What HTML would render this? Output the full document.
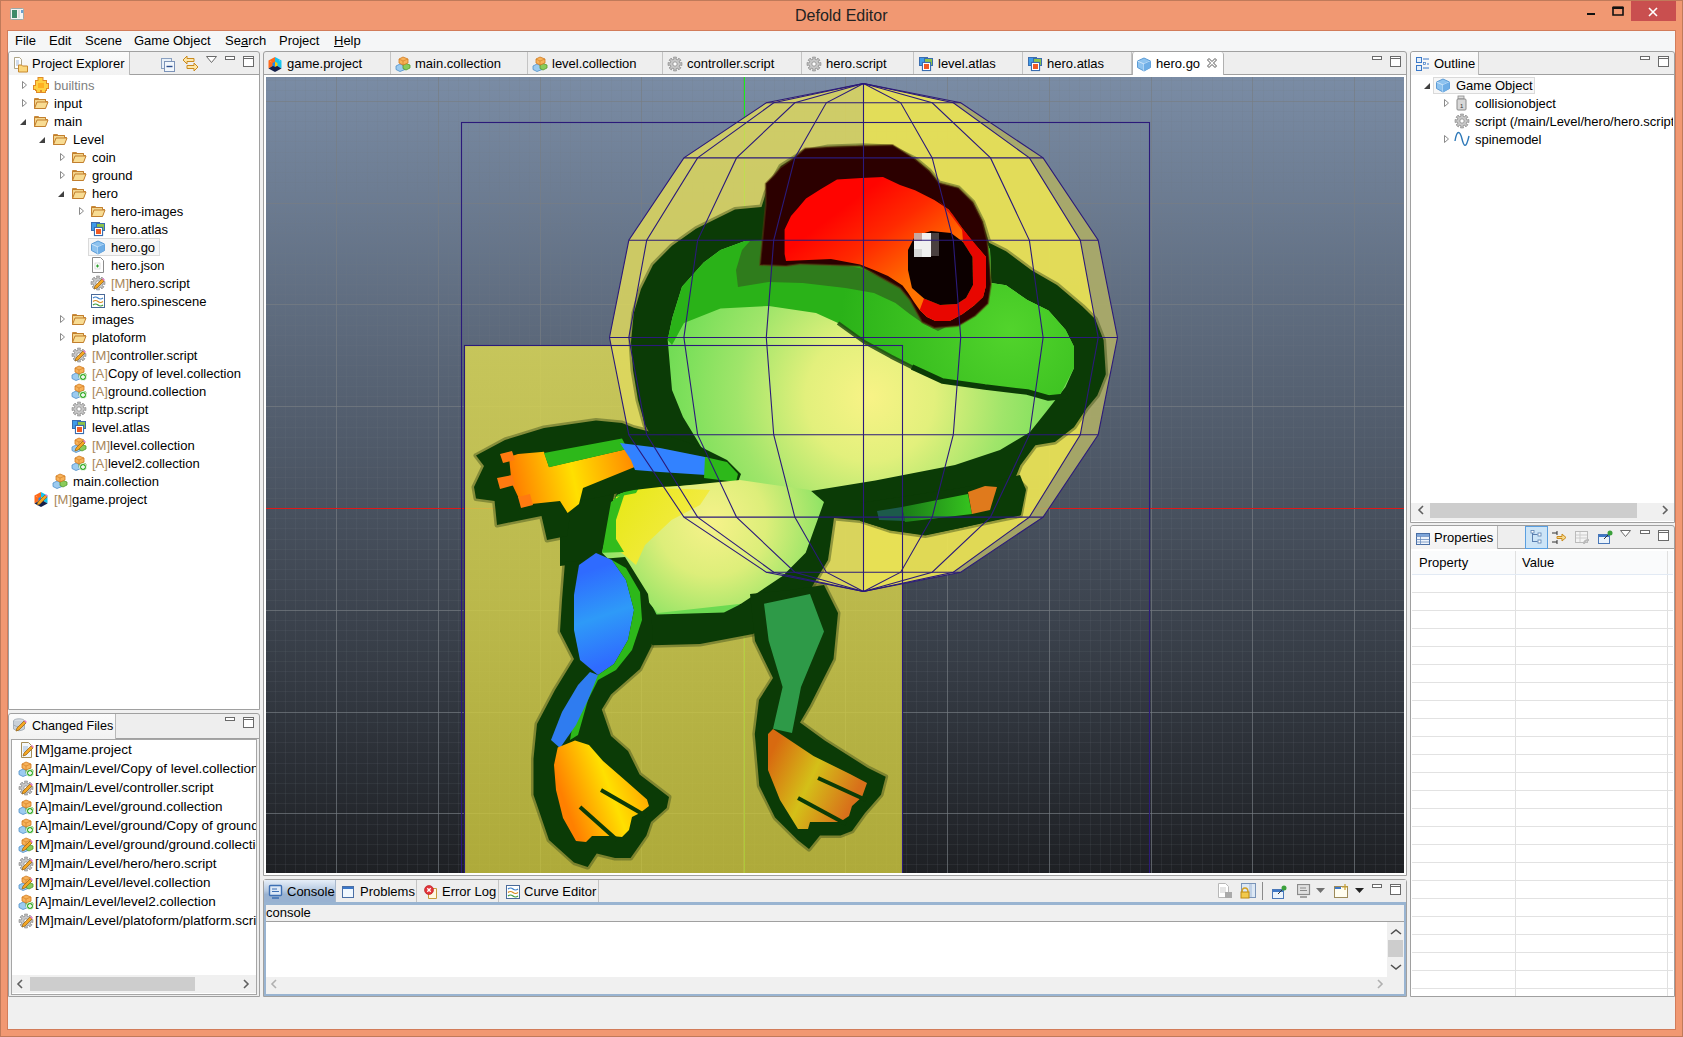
<!DOCTYPE html>
<html><head><meta charset="utf-8"><style>
html,body{margin:0;padding:0;}
body{width:1683px;height:1037px;overflow:hidden;position:relative;font-family:"Liberation Sans", sans-serif;}
</style></head><body>
<div style="position:absolute;left:0px;top:0px;width:1683px;height:1037px;background:#F19872;"></div>
<div style="position:absolute;left:0px;top:0px;width:1px;height:1037px;background:#C07A5A;"></div>
<div style="position:absolute;left:1682px;top:0px;width:1px;height:1037px;background:#C07A5A;"></div>
<div style="position:absolute;left:0px;top:0px;width:1683px;height:1px;background:#C07A5A;"></div>
<div style="position:absolute;left:0px;top:1036px;width:1683px;height:1px;background:#C07A5A;"></div>
<div style="position:absolute;left:795px;top:7px;font-size:16px;line-height:18px;color:#222;white-space:nowrap;">Defold Editor</div>
<svg style="position:absolute;left:10px;top:8px;" width="14" height="12" viewBox="0 0 14 12"><rect x="0.5" y="0.5" width="13" height="11" rx="1" fill="#F4F4F4" stroke="#9AA"/><rect x="2" y="2" width="5" height="8" fill="#3C8A6A"/><rect x="8" y="2" width="2" height="8" fill="#DDD"/><rect x="11" y="2" width="2" height="3" fill="#6AA0D0"/></svg>
<div style="position:absolute;left:1587px;top:13px;width:8px;height:2px;background:#111;"></div>
<svg style="position:absolute;left:1612px;top:6px;" width="12" height="10" viewBox="0 0 12 10"><path d="M1 1.5 h10 M1 1 v8 h10 v-8" fill="none" stroke="#111" stroke-width="1.6"/><rect x="0.5" y="0.5" width="11" height="2.5" fill="#111"/></svg>
<div style="position:absolute;left:1631px;top:1px;width:45px;height:20px;background:#C94F4F;"></div>
<svg style="position:absolute;left:1648px;top:7px;" width="10" height="10" viewBox="0 0 10 10"><path d="M1 1 L9 9 M9 1 L1 9" stroke="#fff" stroke-width="1.6"/></svg>
<div style="position:absolute;left:7px;top:30px;width:1669px;height:1000px;background:#F0F0F0;border:1px solid #D27C5A;box-sizing:border-box;"></div>
<div style="position:absolute;left:8px;top:31px;width:1667px;height:20px;background:#F5F6F7;"></div>
<div style="position:absolute;left:15px;top:33px;font-size:13px;line-height:15px;color:#000;white-space:nowrap;">File</div>
<div style="position:absolute;left:49px;top:33px;font-size:13px;line-height:15px;color:#000;white-space:nowrap;">Edit</div>
<div style="position:absolute;left:85px;top:33px;font-size:13px;line-height:15px;color:#000;white-space:nowrap;">Scene</div>
<div style="position:absolute;left:134px;top:33px;font-size:13px;line-height:15px;color:#000;white-space:nowrap;">Game Object</div>
<div style="position:absolute;left:225px;top:33px;font-size:13px;line-height:15px;color:#000;white-space:nowrap;">Se<u>a</u>rch</div>
<div style="position:absolute;left:279px;top:33px;font-size:13px;line-height:15px;color:#000;white-space:nowrap;">Project</div>
<div style="position:absolute;left:334px;top:33px;font-size:13px;line-height:15px;color:#000;white-space:nowrap;"><u>H</u>elp</div>
<div style="position:absolute;left:8px;top:51px;width:252px;height:659px;border:1px solid #A0A0A0;border-radius:3px 3px 0 0;box-sizing:border-box;background:#EEEEEE;"></div>
<div style="position:absolute;left:9px;top:52px;width:120px;height:23px;background:linear-gradient(#FBFBFB,#F2F2F2);border-right:1px solid #B8B8B8;border-radius:3px 0 0 0;"></div>
<div style="position:absolute;left:9px;top:74px;width:250px;height:1px;background:#A0A0A0;"></div>
<div style="position:absolute;left:9px;top:52px;width:120px;height:23px;background:linear-gradient(#FBFBFB,#F2F2F2);border-right:1px solid #B8B8B8;border-radius:3px 0 0 0;"></div>
<svg style="position:absolute;left:13px;top:57px;" width="16" height="16" viewBox="0 0 16 16"><path d="M1.5 0.5 h5 l2 2 v9 h-7z" fill="#fff" stroke="#9C8F6A" stroke-width="0.8"/><path d="M3 4 h3 M3 6 h3 M3 8 h3" stroke="#7A9AC8" stroke-width="0.7"/><path d="M5.5 8 h3 l1 1 h5 v6 h-9z" fill="#FBD77C" stroke="#C8892E" stroke-width="1"/></svg>
<div style="position:absolute;left:32px;top:56px;font-size:13px;line-height:15px;color:#000;white-space:nowrap;">Project Explorer</div>
<svg style="position:absolute;left:161px;top:58px;" width="14" height="14" viewBox="0 0 14 14"><rect x="0.5" y="0.5" width="10" height="10" fill="#E8F0F8" stroke="#8AA0C0"/><rect x="3.5" y="3.5" width="10" height="10" fill="#F2F7FC" stroke="#7C93B8"/><path d="M5.5 8.5 h6" stroke="#2C4E8E" stroke-width="1.4"/></svg>
<svg style="position:absolute;left:182px;top:55px;" width="17" height="17" viewBox="0 0 17 17"><path d="M1 5 l4-4 v2.5 h7 v3 h-7 v2.5z" fill="#FFE7A8" stroke="#C98A1E" stroke-width="1"/><path d="M16 12 l-4-4 v2.5 h-7 v3 h7 v2.5z" fill="#FFE7A8" stroke="#C98A1E" stroke-width="1"/></svg>
<svg style="position:absolute;left:206px;top:56px;" width="11" height="7" viewBox="0 0 11 7"><path d="M0.5 0.5 h10 l-5 6z" fill="#fff" stroke="#6A6A6A" stroke-width="1"/></svg>
<div style="position:absolute;left:225px;top:56px;width:10px;height:4px;border:1px solid #6A6A6A;box-sizing:border-box;background:#fff;"></div>
<svg style="position:absolute;left:243px;top:56px;" width="11" height="11" viewBox="0 0 11 11"><rect x="0.5" y="0.5" width="10" height="10" fill="#fff" stroke="#6A6A6A"/><path d="M1 2.5 h9" stroke="#6A6A6A"/></svg>
<div style="position:absolute;left:9px;top:75px;width:250px;height:634px;background:#fff;"></div>
<svg style="position:absolute;left:21px;top:80px;" width="7" height="10" viewBox="0 0 7 10"><path d="M1.5 1.5 l4 3.5 l-4 3.5z" fill="none" stroke="#8A8A8A" stroke-width="1"/></svg>
<svg style="position:absolute;left:33px;top:77px;" width="16" height="16" viewBox="0 0 16 16"><rect x="3" y="4" width="10" height="9" fill="#E08A28" stroke="#E08A28" stroke-width="2"/><rect x="5.5" y="1" width="4" height="4" fill="#E08A28" stroke="#E08A28" stroke-width="2"/><rect x="12" y="7" width="3" height="4" fill="#E08A28" stroke="#E08A28" stroke-width="2"/><rect x="1" y="9" width="3" height="3" fill="#E08A28" stroke="#E08A28" stroke-width="2"/><rect x="4" y="12" width="3" height="3" fill="#E08A28" stroke="#E08A28" stroke-width="2"/><rect x="9" y="12" width="3" height="3" fill="#E08A28" stroke="#E08A28" stroke-width="2"/><rect x="3" y="4" width="10" height="9" fill="#FFD040"/><rect x="5.5" y="1" width="4" height="4" fill="#FFD040"/><rect x="12" y="7" width="3" height="4" fill="#FFD040"/><rect x="1" y="9" width="3" height="3" fill="#FFD040"/><rect x="4" y="12" width="3" height="3" fill="#FFD040"/><rect x="9" y="12" width="3" height="3" fill="#FFD040"/><rect x="5" y="6" width="6" height="5" fill="#FFB020"/></svg>
<div style="position:absolute;left:54px;top:78px;font-size:13px;line-height:15px;color:#808080;white-space:nowrap;">builtins</div>
<svg style="position:absolute;left:21px;top:98px;" width="7" height="10" viewBox="0 0 7 10"><path d="M1.5 1.5 l4 3.5 l-4 3.5z" fill="none" stroke="#8A8A8A" stroke-width="1"/></svg>
<svg style="position:absolute;left:33px;top:95px;" width="16" height="16" viewBox="0 0 16 16"><path d="M1.5 3.5 h4 l1 1 h6 v2 h-11z" fill="#F6E3B0" stroke="#C98A3A" stroke-width="1"/><path d="M1.5 13.5 v-9 h11 v2 h2 l-2.5 7z" fill="#F3D58C" stroke="#C27F2E" stroke-width="1"/><path d="M1.5 13.5 l2.5-6.5 h11 l-2.5 6.5z" fill="#F8DC93" stroke="#C27F2E" stroke-width="1"/></svg>
<div style="position:absolute;left:54px;top:96px;font-size:13px;line-height:15px;color:#000;white-space:nowrap;">input</div>
<svg style="position:absolute;left:20px;top:118px;" width="7" height="8" viewBox="0 0 7 8"><path d="M6 1 v6 h-6z" fill="#404040"/></svg>
<svg style="position:absolute;left:33px;top:113px;" width="16" height="16" viewBox="0 0 16 16"><path d="M1.5 3.5 h4 l1 1 h6 v2 h-11z" fill="#F6E3B0" stroke="#C98A3A" stroke-width="1"/><path d="M1.5 13.5 v-9 h11 v2 h2 l-2.5 7z" fill="#F3D58C" stroke="#C27F2E" stroke-width="1"/><path d="M1.5 13.5 l2.5-6.5 h11 l-2.5 6.5z" fill="#F8DC93" stroke="#C27F2E" stroke-width="1"/></svg>
<div style="position:absolute;left:54px;top:114px;font-size:13px;line-height:15px;color:#000;white-space:nowrap;">main</div>
<svg style="position:absolute;left:39px;top:136px;" width="7" height="8" viewBox="0 0 7 8"><path d="M6 1 v6 h-6z" fill="#404040"/></svg>
<svg style="position:absolute;left:52px;top:131px;" width="16" height="16" viewBox="0 0 16 16"><path d="M1.5 3.5 h4 l1 1 h6 v2 h-11z" fill="#F6E3B0" stroke="#C98A3A" stroke-width="1"/><path d="M1.5 13.5 v-9 h11 v2 h2 l-2.5 7z" fill="#F3D58C" stroke="#C27F2E" stroke-width="1"/><path d="M1.5 13.5 l2.5-6.5 h11 l-2.5 6.5z" fill="#F8DC93" stroke="#C27F2E" stroke-width="1"/></svg>
<div style="position:absolute;left:73px;top:132px;font-size:13px;line-height:15px;color:#000;white-space:nowrap;">Level</div>
<svg style="position:absolute;left:59px;top:152px;" width="7" height="10" viewBox="0 0 7 10"><path d="M1.5 1.5 l4 3.5 l-4 3.5z" fill="none" stroke="#8A8A8A" stroke-width="1"/></svg>
<svg style="position:absolute;left:71px;top:149px;" width="16" height="16" viewBox="0 0 16 16"><path d="M1.5 3.5 h4 l1 1 h6 v2 h-11z" fill="#F6E3B0" stroke="#C98A3A" stroke-width="1"/><path d="M1.5 13.5 v-9 h11 v2 h2 l-2.5 7z" fill="#F3D58C" stroke="#C27F2E" stroke-width="1"/><path d="M1.5 13.5 l2.5-6.5 h11 l-2.5 6.5z" fill="#F8DC93" stroke="#C27F2E" stroke-width="1"/></svg>
<div style="position:absolute;left:92px;top:150px;font-size:13px;line-height:15px;color:#000;white-space:nowrap;">coin</div>
<svg style="position:absolute;left:59px;top:170px;" width="7" height="10" viewBox="0 0 7 10"><path d="M1.5 1.5 l4 3.5 l-4 3.5z" fill="none" stroke="#8A8A8A" stroke-width="1"/></svg>
<svg style="position:absolute;left:71px;top:167px;" width="16" height="16" viewBox="0 0 16 16"><path d="M1.5 3.5 h4 l1 1 h6 v2 h-11z" fill="#F6E3B0" stroke="#C98A3A" stroke-width="1"/><path d="M1.5 13.5 v-9 h11 v2 h2 l-2.5 7z" fill="#F3D58C" stroke="#C27F2E" stroke-width="1"/><path d="M1.5 13.5 l2.5-6.5 h11 l-2.5 6.5z" fill="#F8DC93" stroke="#C27F2E" stroke-width="1"/></svg>
<div style="position:absolute;left:92px;top:168px;font-size:13px;line-height:15px;color:#000;white-space:nowrap;">ground</div>
<svg style="position:absolute;left:58px;top:190px;" width="7" height="8" viewBox="0 0 7 8"><path d="M6 1 v6 h-6z" fill="#404040"/></svg>
<svg style="position:absolute;left:71px;top:185px;" width="16" height="16" viewBox="0 0 16 16"><path d="M1.5 3.5 h4 l1 1 h6 v2 h-11z" fill="#F6E3B0" stroke="#C98A3A" stroke-width="1"/><path d="M1.5 13.5 v-9 h11 v2 h2 l-2.5 7z" fill="#F3D58C" stroke="#C27F2E" stroke-width="1"/><path d="M1.5 13.5 l2.5-6.5 h11 l-2.5 6.5z" fill="#F8DC93" stroke="#C27F2E" stroke-width="1"/></svg>
<div style="position:absolute;left:92px;top:186px;font-size:13px;line-height:15px;color:#000;white-space:nowrap;">hero</div>
<svg style="position:absolute;left:78px;top:206px;" width="7" height="10" viewBox="0 0 7 10"><path d="M1.5 1.5 l4 3.5 l-4 3.5z" fill="none" stroke="#8A8A8A" stroke-width="1"/></svg>
<svg style="position:absolute;left:90px;top:203px;" width="16" height="16" viewBox="0 0 16 16"><path d="M1.5 3.5 h4 l1 1 h6 v2 h-11z" fill="#F6E3B0" stroke="#C98A3A" stroke-width="1"/><path d="M1.5 13.5 v-9 h11 v2 h2 l-2.5 7z" fill="#F3D58C" stroke="#C27F2E" stroke-width="1"/><path d="M1.5 13.5 l2.5-6.5 h11 l-2.5 6.5z" fill="#F8DC93" stroke="#C27F2E" stroke-width="1"/></svg>
<div style="position:absolute;left:111px;top:204px;font-size:13px;line-height:15px;color:#000;white-space:nowrap;">hero-images</div>
<svg style="position:absolute;left:90px;top:221px;" width="16" height="16" viewBox="0 0 16 16"><rect x="1.5" y="1.5" width="8" height="8" fill="#3E9BE8" stroke="#3A6DB0"/><rect x="6.5" y="2.5" width="8" height="7" fill="#8CC24A" stroke="#3A6DB0"/><rect x="4.5" y="6.5" width="8" height="8" fill="#E83A1C" stroke="#3A6DB0" stroke-width="1.2"/><rect x="5.5" y="7.5" width="6" height="6" fill="#F05A24" stroke="#fff" stroke-width="1"/></svg>
<div style="position:absolute;left:111px;top:222px;font-size:13px;line-height:15px;color:#000;white-space:nowrap;">hero.atlas</div>
<div style="position:absolute;left:88px;top:238px;width:72px;height:18px;background:#F7F7F7;border:1px solid #DADADA;box-sizing:border-box;"></div>
<svg style="position:absolute;left:90px;top:239px;" width="16" height="16" viewBox="0 0 16 16"><path d="M1.5 5 l6.5-3 l6.5 3 v6.5 l-6.5 3.5 l-6.5-3.5z" fill="#8EC3EF" stroke="#5A9BD6" stroke-width="1"/><path d="M1.5 5 l6.5 3 l6.5-3 M8 8 v7" stroke="#CFE6FA" stroke-width="1" fill="none"/><path d="M8 8 l6.5-3 v6.5 l-6.5 3.5z" fill="#6FAEE6"/></svg>
<div style="position:absolute;left:111px;top:240px;font-size:13px;line-height:15px;color:#000;white-space:nowrap;">hero.go</div>
<svg style="position:absolute;left:90px;top:257px;" width="16" height="16" viewBox="0 0 16 16"><path d="M2.5 0.5 h8 l3 3 v12 h-11z" fill="#fff" stroke="#8C8C8C" stroke-width="1"/><rect x="5" y="6" width="5" height="6" fill="none" stroke="#C8C8C8" stroke-width="0.6"/><path d="M6 9 h3 M7.5 7.5 v3" stroke="#2EA12E" stroke-width="1.2"/></svg>
<div style="position:absolute;left:111px;top:258px;font-size:13px;line-height:15px;color:#000;white-space:nowrap;">hero.json</div>
<svg style="position:absolute;left:90px;top:275px;" width="16" height="16" viewBox="0 0 16 16"><polygon points="14.83,6.47 14.83,9.53 12.93,8.86 12.09,10.88 13.91,11.75 11.75,13.91 10.88,12.09 8.86,12.93 9.53,14.83 6.47,14.83 7.14,12.93 5.12,12.09 4.25,13.91 2.09,11.75 3.91,10.88 3.07,8.86 1.17,9.53 1.17,6.47 3.07,7.14 3.91,5.12 2.09,4.25 4.25,2.09 5.12,3.91 7.14,3.07 6.47,1.17 9.53,1.17 8.86,3.07 10.88,3.91 11.75,2.09 13.91,4.25 12.09,5.12 12.93,7.14" fill="#C8C8C8" stroke="#9A9A9A" stroke-width="1"/><circle cx="8" cy="8" r="2.2" fill="#fff" stroke="#9A9A9A" stroke-width="1"/><path d="M4 14 l1-3 l7-7 l2 2 l-7 7z" fill="#F5A623" stroke="#9B6A1B" stroke-width="0.8"/><path d="M12 4 l1-1 l2 2 l-1 1z" fill="#E87FD0"/></svg>
<div style="position:absolute;left:111px;top:276px;font-size:13px;line-height:15px;color:#000;white-space:nowrap;"><span style="color:#A8875A">[M]</span>hero.script</div>
<svg style="position:absolute;left:90px;top:293px;" width="16" height="16" viewBox="0 0 16 16"><rect x="1.5" y="1.5" width="13" height="13" fill="#fff" stroke="#4A6A99" stroke-width="1"/><path d="M3 5 q2.5-2 5 0 t5 0" stroke="#3A7EC8" stroke-width="1.2" fill="none"/><path d="M3 8.5 q2.5-2 5 0 t5 0" stroke="#D98A1F" stroke-width="1.2" fill="none"/><path d="M3 12 q2.5-2 5 0 t5 0" stroke="#3D9A3D" stroke-width="1.2" fill="none"/></svg>
<div style="position:absolute;left:111px;top:294px;font-size:13px;line-height:15px;color:#000;white-space:nowrap;">hero.spinescene</div>
<svg style="position:absolute;left:59px;top:314px;" width="7" height="10" viewBox="0 0 7 10"><path d="M1.5 1.5 l4 3.5 l-4 3.5z" fill="none" stroke="#8A8A8A" stroke-width="1"/></svg>
<svg style="position:absolute;left:71px;top:311px;" width="16" height="16" viewBox="0 0 16 16"><path d="M1.5 3.5 h4 l1 1 h6 v2 h-11z" fill="#F6E3B0" stroke="#C98A3A" stroke-width="1"/><path d="M1.5 13.5 v-9 h11 v2 h2 l-2.5 7z" fill="#F3D58C" stroke="#C27F2E" stroke-width="1"/><path d="M1.5 13.5 l2.5-6.5 h11 l-2.5 6.5z" fill="#F8DC93" stroke="#C27F2E" stroke-width="1"/></svg>
<div style="position:absolute;left:92px;top:312px;font-size:13px;line-height:15px;color:#000;white-space:nowrap;">images</div>
<svg style="position:absolute;left:59px;top:332px;" width="7" height="10" viewBox="0 0 7 10"><path d="M1.5 1.5 l4 3.5 l-4 3.5z" fill="none" stroke="#8A8A8A" stroke-width="1"/></svg>
<svg style="position:absolute;left:71px;top:329px;" width="16" height="16" viewBox="0 0 16 16"><path d="M1.5 3.5 h4 l1 1 h6 v2 h-11z" fill="#F6E3B0" stroke="#C98A3A" stroke-width="1"/><path d="M1.5 13.5 v-9 h11 v2 h2 l-2.5 7z" fill="#F3D58C" stroke="#C27F2E" stroke-width="1"/><path d="M1.5 13.5 l2.5-6.5 h11 l-2.5 6.5z" fill="#F8DC93" stroke="#C27F2E" stroke-width="1"/></svg>
<div style="position:absolute;left:92px;top:330px;font-size:13px;line-height:15px;color:#000;white-space:nowrap;">platoform</div>
<svg style="position:absolute;left:71px;top:347px;" width="16" height="16" viewBox="0 0 16 16"><polygon points="14.83,6.47 14.83,9.53 12.93,8.86 12.09,10.88 13.91,11.75 11.75,13.91 10.88,12.09 8.86,12.93 9.53,14.83 6.47,14.83 7.14,12.93 5.12,12.09 4.25,13.91 2.09,11.75 3.91,10.88 3.07,8.86 1.17,9.53 1.17,6.47 3.07,7.14 3.91,5.12 2.09,4.25 4.25,2.09 5.12,3.91 7.14,3.07 6.47,1.17 9.53,1.17 8.86,3.07 10.88,3.91 11.75,2.09 13.91,4.25 12.09,5.12 12.93,7.14" fill="#C8C8C8" stroke="#9A9A9A" stroke-width="1"/><circle cx="8" cy="8" r="2.2" fill="#fff" stroke="#9A9A9A" stroke-width="1"/><path d="M4 14 l1-3 l7-7 l2 2 l-7 7z" fill="#F5A623" stroke="#9B6A1B" stroke-width="0.8"/><path d="M12 4 l1-1 l2 2 l-1 1z" fill="#E87FD0"/></svg>
<div style="position:absolute;left:92px;top:348px;font-size:13px;line-height:15px;color:#000;white-space:nowrap;"><span style="color:#A8875A">[M]</span>controller.script</div>
<svg style="position:absolute;left:71px;top:365px;" width="16" height="16" viewBox="0 0 16 16"><path d="M1 10 l4-2 l5 2 v3.5 l-5 2 l-4-2z" fill="#9CCBF0" stroke="#4E8FC9" stroke-width="0.8"/><path d="M8 9 l3-1.5 l4 1.5 v3 l-4 2 l-3-1.5z" fill="#8BCB5B" stroke="#4F9A2C" stroke-width="0.8"/><path d="M4 3 l4-2 l5 2 v4 l-5 2 l-4-2z" fill="#F7B25A" stroke="#D07A1F" stroke-width="0.8"/><path d="M4 3 l4 2 l5-2 M8 5 v4" stroke="#D07A1F" stroke-width="0.6" fill="none"/><circle cx="12" cy="12" r="3.6" fill="#3AAE2E" stroke="#fff" stroke-width="0.8"/><path d="M10 12 h4 M12 10 v4" stroke="#fff" stroke-width="1.3"/></svg>
<div style="position:absolute;left:92px;top:366px;font-size:13px;line-height:15px;color:#000;white-space:nowrap;"><span style="color:#A8875A">[A]</span>Copy of level.collection</div>
<svg style="position:absolute;left:71px;top:383px;" width="16" height="16" viewBox="0 0 16 16"><path d="M1 10 l4-2 l5 2 v3.5 l-5 2 l-4-2z" fill="#9CCBF0" stroke="#4E8FC9" stroke-width="0.8"/><path d="M8 9 l3-1.5 l4 1.5 v3 l-4 2 l-3-1.5z" fill="#8BCB5B" stroke="#4F9A2C" stroke-width="0.8"/><path d="M4 3 l4-2 l5 2 v4 l-5 2 l-4-2z" fill="#F7B25A" stroke="#D07A1F" stroke-width="0.8"/><path d="M4 3 l4 2 l5-2 M8 5 v4" stroke="#D07A1F" stroke-width="0.6" fill="none"/><circle cx="12" cy="12" r="3.6" fill="#3AAE2E" stroke="#fff" stroke-width="0.8"/><path d="M10 12 h4 M12 10 v4" stroke="#fff" stroke-width="1.3"/></svg>
<div style="position:absolute;left:92px;top:384px;font-size:13px;line-height:15px;color:#000;white-space:nowrap;"><span style="color:#A8875A">[A]</span>ground.collection</div>
<svg style="position:absolute;left:71px;top:401px;" width="16" height="16" viewBox="0 0 16 16"><polygon points="14.83,6.47 14.83,9.53 12.93,8.86 12.09,10.88 13.91,11.75 11.75,13.91 10.88,12.09 8.86,12.93 9.53,14.83 6.47,14.83 7.14,12.93 5.12,12.09 4.25,13.91 2.09,11.75 3.91,10.88 3.07,8.86 1.17,9.53 1.17,6.47 3.07,7.14 3.91,5.12 2.09,4.25 4.25,2.09 5.12,3.91 7.14,3.07 6.47,1.17 9.53,1.17 8.86,3.07 10.88,3.91 11.75,2.09 13.91,4.25 12.09,5.12 12.93,7.14" fill="#C8C8C8" stroke="#9A9A9A" stroke-width="1"/><circle cx="8" cy="8" r="2.2" fill="#fff" stroke="#9A9A9A" stroke-width="1"/></svg>
<div style="position:absolute;left:92px;top:402px;font-size:13px;line-height:15px;color:#000;white-space:nowrap;">http.script</div>
<svg style="position:absolute;left:71px;top:419px;" width="16" height="16" viewBox="0 0 16 16"><rect x="1.5" y="1.5" width="8" height="8" fill="#3E9BE8" stroke="#3A6DB0"/><rect x="6.5" y="2.5" width="8" height="7" fill="#8CC24A" stroke="#3A6DB0"/><rect x="4.5" y="6.5" width="8" height="8" fill="#E83A1C" stroke="#3A6DB0" stroke-width="1.2"/><rect x="5.5" y="7.5" width="6" height="6" fill="#F05A24" stroke="#fff" stroke-width="1"/></svg>
<div style="position:absolute;left:92px;top:420px;font-size:13px;line-height:15px;color:#000;white-space:nowrap;">level.atlas</div>
<svg style="position:absolute;left:71px;top:437px;" width="16" height="16" viewBox="0 0 16 16"><path d="M1 10 l4-2 l5 2 v3.5 l-5 2 l-4-2z" fill="#9CCBF0" stroke="#4E8FC9" stroke-width="0.8"/><path d="M8 9 l3-1.5 l4 1.5 v3 l-4 2 l-3-1.5z" fill="#8BCB5B" stroke="#4F9A2C" stroke-width="0.8"/><path d="M4 3 l4-2 l5 2 v4 l-5 2 l-4-2z" fill="#F7B25A" stroke="#D07A1F" stroke-width="0.8"/><path d="M4 3 l4 2 l5-2 M8 5 v4" stroke="#D07A1F" stroke-width="0.6" fill="none"/><path d="M4 14 l1-3 l7-7 l2 2 l-7 7z" fill="#F5A623" stroke="#9B6A1B" stroke-width="0.8"/><path d="M12 4 l1-1 l2 2 l-1 1z" fill="#E87FD0"/></svg>
<div style="position:absolute;left:92px;top:438px;font-size:13px;line-height:15px;color:#000;white-space:nowrap;"><span style="color:#A8875A">[M]</span>level.collection</div>
<svg style="position:absolute;left:71px;top:455px;" width="16" height="16" viewBox="0 0 16 16"><path d="M1 10 l4-2 l5 2 v3.5 l-5 2 l-4-2z" fill="#9CCBF0" stroke="#4E8FC9" stroke-width="0.8"/><path d="M8 9 l3-1.5 l4 1.5 v3 l-4 2 l-3-1.5z" fill="#8BCB5B" stroke="#4F9A2C" stroke-width="0.8"/><path d="M4 3 l4-2 l5 2 v4 l-5 2 l-4-2z" fill="#F7B25A" stroke="#D07A1F" stroke-width="0.8"/><path d="M4 3 l4 2 l5-2 M8 5 v4" stroke="#D07A1F" stroke-width="0.6" fill="none"/><circle cx="12" cy="12" r="3.6" fill="#3AAE2E" stroke="#fff" stroke-width="0.8"/><path d="M10 12 h4 M12 10 v4" stroke="#fff" stroke-width="1.3"/></svg>
<div style="position:absolute;left:92px;top:456px;font-size:13px;line-height:15px;color:#000;white-space:nowrap;"><span style="color:#A8875A">[A]</span>level2.collection</div>
<svg style="position:absolute;left:52px;top:473px;" width="16" height="16" viewBox="0 0 16 16"><path d="M1 10 l4-2 l5 2 v3.5 l-5 2 l-4-2z" fill="#9CCBF0" stroke="#4E8FC9" stroke-width="0.8"/><path d="M8 9 l3-1.5 l4 1.5 v3 l-4 2 l-3-1.5z" fill="#8BCB5B" stroke="#4F9A2C" stroke-width="0.8"/><path d="M4 3 l4-2 l5 2 v4 l-5 2 l-4-2z" fill="#F7B25A" stroke="#D07A1F" stroke-width="0.8"/><path d="M4 3 l4 2 l5-2 M8 5 v4" stroke="#D07A1F" stroke-width="0.6" fill="none"/></svg>
<div style="position:absolute;left:73px;top:474px;font-size:13px;line-height:15px;color:#000;white-space:nowrap;">main.collection</div>
<svg style="position:absolute;left:33px;top:491px;" width="16" height="16" viewBox="0 0 16 16"><path d="M1.5 4.5 L8 1 L8 8.5 L1.5 12.5z" fill="#FF6A1A"/><path d="M8 1 L14.5 4.5 L14.5 12.5 L8 8.5z" fill="#14C4EE"/><path d="M1.5 12.5 L8 8.5 L14.5 12.5 L8 16z" fill="#14204A"/><path d="M5.5 7 L8 5.7 L8 11 L5.5 9.7z" fill="#1A8AF0"/><path d="M8 5.7 L10.5 7 L10.5 9.7 L8 11z" fill="#FFC800"/><path d="M3 5 l1.5 1 M12 4 l1 1.5" stroke="#fff" stroke-opacity="0.4" stroke-width="0.8"/><path d="M4 14 l1-3 l7-7 l2 2 l-7 7z" fill="#F5A623" stroke="#9B6A1B" stroke-width="0.8"/><path d="M12 4 l1-1 l2 2 l-1 1z" fill="#E87FD0"/></svg>
<div style="position:absolute;left:54px;top:492px;font-size:13px;line-height:15px;color:#000;white-space:nowrap;"><span style="color:#A8875A">[M]</span>game.project</div>
<div style="position:absolute;left:8px;top:713px;width:252px;height:284px;border:1px solid #A0A0A0;border-radius:3px 3px 0 0;box-sizing:border-box;background:#EEEEEE;"></div>
<div style="position:absolute;left:9px;top:714px;width:106px;height:25px;background:linear-gradient(#FBFBFB,#F2F2F2);border-right:1px solid #B8B8B8;border-radius:3px 0 0 0;"></div>
<div style="position:absolute;left:116px;top:738px;width:143px;height:1px;background:#A0A0A0;"></div>
<svg style="position:absolute;left:12px;top:717px;" width="16" height="16" viewBox="0 0 16 16"><ellipse cx="7" cy="4" rx="5.5" ry="2.2" fill="#D8DEE4" stroke="#9AA4AE" stroke-width="0.8"/><path d="M1.5 4 v8 q5.5 3.5 11 0 v-8" fill="#C9D0D8" stroke="#9AA4AE" stroke-width="0.8"/><path d="M1.5 8 q5.5 3.5 11 0" fill="none" stroke="#9AA4AE" stroke-width="0.8"/><path d="M4 14 l1-3 l7-7 l2 2 l-7 7z" fill="#F5A623" stroke="#9B6A1B" stroke-width="0.8"/><path d="M12 4 l1-1 l2 2 l-1 1z" fill="#E87FD0"/></svg>
<div style="position:absolute;left:32px;top:719px;font-size:12.6px;line-height:14.6px;color:#000;white-space:nowrap;">Changed Files</div>
<div style="position:absolute;left:225px;top:717px;width:10px;height:4px;border:1px solid #6A6A6A;box-sizing:border-box;background:#fff;"></div>
<svg style="position:absolute;left:243px;top:717px;" width="11" height="11" viewBox="0 0 11 11"><rect x="0.5" y="0.5" width="10" height="10" fill="#fff" stroke="#6A6A6A"/><path d="M1 2.5 h9" stroke="#6A6A6A"/></svg>
<div style="position:absolute;left:11px;top:739px;width:246px;height:256px;background:#fff;border:1px solid #A6A6A6;box-sizing:border-box;"></div>
<div style="position:absolute;left:12px;top:740px;width:244px;height:236px;overflow:hidden;"><svg style="position:absolute;left:7px;top:2px;" width="16" height="16" viewBox="0 0 16 16"><path d="M2.5 0.5 h7 l3 3 v12 h-10z" fill="#F4F8FC" stroke="#A58E5A" stroke-width="1"/><path d="M4 5 h5 M4 7 h5 M4 9 h4" stroke="#8AA8D0" stroke-width="0.8"/><path d="M4 14 l1-3 l7-7 l2 2 l-7 7z" fill="#F5A623" stroke="#9B6A1B" stroke-width="0.8"/><path d="M12 4 l1-1 l2 2 l-1 1z" fill="#E87FD0"/></svg>
<div style="position:absolute;left:23px;top:2px;font-size:13.5px;line-height:15.5px;color:#000;white-space:nowrap;">[M]game.project</div>
<svg style="position:absolute;left:6px;top:21px;" width="16" height="16" viewBox="0 0 16 16"><path d="M1 10 l4-2 l5 2 v3.5 l-5 2 l-4-2z" fill="#9CCBF0" stroke="#4E8FC9" stroke-width="0.8"/><path d="M8 9 l3-1.5 l4 1.5 v3 l-4 2 l-3-1.5z" fill="#8BCB5B" stroke="#4F9A2C" stroke-width="0.8"/><path d="M4 3 l4-2 l5 2 v4 l-5 2 l-4-2z" fill="#F7B25A" stroke="#D07A1F" stroke-width="0.8"/><path d="M4 3 l4 2 l5-2 M8 5 v4" stroke="#D07A1F" stroke-width="0.6" fill="none"/><circle cx="12" cy="12" r="3.6" fill="#3AAE2E" stroke="#fff" stroke-width="0.8"/><path d="M10 12 h4 M12 10 v4" stroke="#fff" stroke-width="1.3"/></svg>
<div style="position:absolute;left:23px;top:21px;font-size:13.5px;line-height:15.5px;color:#000;white-space:nowrap;">[A]main/Level/Copy of level.collection</div>
<svg style="position:absolute;left:6px;top:40px;" width="16" height="16" viewBox="0 0 16 16"><polygon points="14.83,6.47 14.83,9.53 12.93,8.86 12.09,10.88 13.91,11.75 11.75,13.91 10.88,12.09 8.86,12.93 9.53,14.83 6.47,14.83 7.14,12.93 5.12,12.09 4.25,13.91 2.09,11.75 3.91,10.88 3.07,8.86 1.17,9.53 1.17,6.47 3.07,7.14 3.91,5.12 2.09,4.25 4.25,2.09 5.12,3.91 7.14,3.07 6.47,1.17 9.53,1.17 8.86,3.07 10.88,3.91 11.75,2.09 13.91,4.25 12.09,5.12 12.93,7.14" fill="#C8C8C8" stroke="#9A9A9A" stroke-width="1"/><circle cx="8" cy="8" r="2.2" fill="#fff" stroke="#9A9A9A" stroke-width="1"/><path d="M4 14 l1-3 l7-7 l2 2 l-7 7z" fill="#F5A623" stroke="#9B6A1B" stroke-width="0.8"/><path d="M12 4 l1-1 l2 2 l-1 1z" fill="#E87FD0"/></svg>
<div style="position:absolute;left:23px;top:40px;font-size:13.5px;line-height:15.5px;color:#000;white-space:nowrap;">[M]main/Level/controller.script</div>
<svg style="position:absolute;left:6px;top:59px;" width="16" height="16" viewBox="0 0 16 16"><path d="M1 10 l4-2 l5 2 v3.5 l-5 2 l-4-2z" fill="#9CCBF0" stroke="#4E8FC9" stroke-width="0.8"/><path d="M8 9 l3-1.5 l4 1.5 v3 l-4 2 l-3-1.5z" fill="#8BCB5B" stroke="#4F9A2C" stroke-width="0.8"/><path d="M4 3 l4-2 l5 2 v4 l-5 2 l-4-2z" fill="#F7B25A" stroke="#D07A1F" stroke-width="0.8"/><path d="M4 3 l4 2 l5-2 M8 5 v4" stroke="#D07A1F" stroke-width="0.6" fill="none"/><circle cx="12" cy="12" r="3.6" fill="#3AAE2E" stroke="#fff" stroke-width="0.8"/><path d="M10 12 h4 M12 10 v4" stroke="#fff" stroke-width="1.3"/></svg>
<div style="position:absolute;left:23px;top:59px;font-size:13.5px;line-height:15.5px;color:#000;white-space:nowrap;">[A]main/Level/ground.collection</div>
<svg style="position:absolute;left:6px;top:78px;" width="16" height="16" viewBox="0 0 16 16"><path d="M1 10 l4-2 l5 2 v3.5 l-5 2 l-4-2z" fill="#9CCBF0" stroke="#4E8FC9" stroke-width="0.8"/><path d="M8 9 l3-1.5 l4 1.5 v3 l-4 2 l-3-1.5z" fill="#8BCB5B" stroke="#4F9A2C" stroke-width="0.8"/><path d="M4 3 l4-2 l5 2 v4 l-5 2 l-4-2z" fill="#F7B25A" stroke="#D07A1F" stroke-width="0.8"/><path d="M4 3 l4 2 l5-2 M8 5 v4" stroke="#D07A1F" stroke-width="0.6" fill="none"/><circle cx="12" cy="12" r="3.6" fill="#3AAE2E" stroke="#fff" stroke-width="0.8"/><path d="M10 12 h4 M12 10 v4" stroke="#fff" stroke-width="1.3"/></svg>
<div style="position:absolute;left:23px;top:78px;font-size:13.5px;line-height:15.5px;color:#000;white-space:nowrap;">[A]main/Level/ground/Copy of ground.collection</div>
<svg style="position:absolute;left:6px;top:97px;" width="16" height="16" viewBox="0 0 16 16"><path d="M1 10 l4-2 l5 2 v3.5 l-5 2 l-4-2z" fill="#9CCBF0" stroke="#4E8FC9" stroke-width="0.8"/><path d="M8 9 l3-1.5 l4 1.5 v3 l-4 2 l-3-1.5z" fill="#8BCB5B" stroke="#4F9A2C" stroke-width="0.8"/><path d="M4 3 l4-2 l5 2 v4 l-5 2 l-4-2z" fill="#F7B25A" stroke="#D07A1F" stroke-width="0.8"/><path d="M4 3 l4 2 l5-2 M8 5 v4" stroke="#D07A1F" stroke-width="0.6" fill="none"/><path d="M4 14 l1-3 l7-7 l2 2 l-7 7z" fill="#F5A623" stroke="#9B6A1B" stroke-width="0.8"/><path d="M12 4 l1-1 l2 2 l-1 1z" fill="#E87FD0"/></svg>
<div style="position:absolute;left:23px;top:97px;font-size:13.5px;line-height:15.5px;color:#000;white-space:nowrap;">[M]main/Level/ground/ground.collection</div>
<svg style="position:absolute;left:6px;top:116px;" width="16" height="16" viewBox="0 0 16 16"><polygon points="14.83,6.47 14.83,9.53 12.93,8.86 12.09,10.88 13.91,11.75 11.75,13.91 10.88,12.09 8.86,12.93 9.53,14.83 6.47,14.83 7.14,12.93 5.12,12.09 4.25,13.91 2.09,11.75 3.91,10.88 3.07,8.86 1.17,9.53 1.17,6.47 3.07,7.14 3.91,5.12 2.09,4.25 4.25,2.09 5.12,3.91 7.14,3.07 6.47,1.17 9.53,1.17 8.86,3.07 10.88,3.91 11.75,2.09 13.91,4.25 12.09,5.12 12.93,7.14" fill="#C8C8C8" stroke="#9A9A9A" stroke-width="1"/><circle cx="8" cy="8" r="2.2" fill="#fff" stroke="#9A9A9A" stroke-width="1"/><path d="M4 14 l1-3 l7-7 l2 2 l-7 7z" fill="#F5A623" stroke="#9B6A1B" stroke-width="0.8"/><path d="M12 4 l1-1 l2 2 l-1 1z" fill="#E87FD0"/></svg>
<div style="position:absolute;left:23px;top:116px;font-size:13.5px;line-height:15.5px;color:#000;white-space:nowrap;">[M]main/Level/hero/hero.script</div>
<svg style="position:absolute;left:6px;top:135px;" width="16" height="16" viewBox="0 0 16 16"><path d="M1 10 l4-2 l5 2 v3.5 l-5 2 l-4-2z" fill="#9CCBF0" stroke="#4E8FC9" stroke-width="0.8"/><path d="M8 9 l3-1.5 l4 1.5 v3 l-4 2 l-3-1.5z" fill="#8BCB5B" stroke="#4F9A2C" stroke-width="0.8"/><path d="M4 3 l4-2 l5 2 v4 l-5 2 l-4-2z" fill="#F7B25A" stroke="#D07A1F" stroke-width="0.8"/><path d="M4 3 l4 2 l5-2 M8 5 v4" stroke="#D07A1F" stroke-width="0.6" fill="none"/><path d="M4 14 l1-3 l7-7 l2 2 l-7 7z" fill="#F5A623" stroke="#9B6A1B" stroke-width="0.8"/><path d="M12 4 l1-1 l2 2 l-1 1z" fill="#E87FD0"/></svg>
<div style="position:absolute;left:23px;top:135px;font-size:13.5px;line-height:15.5px;color:#000;white-space:nowrap;">[M]main/Level/level.collection</div>
<svg style="position:absolute;left:6px;top:154px;" width="16" height="16" viewBox="0 0 16 16"><path d="M1 10 l4-2 l5 2 v3.5 l-5 2 l-4-2z" fill="#9CCBF0" stroke="#4E8FC9" stroke-width="0.8"/><path d="M8 9 l3-1.5 l4 1.5 v3 l-4 2 l-3-1.5z" fill="#8BCB5B" stroke="#4F9A2C" stroke-width="0.8"/><path d="M4 3 l4-2 l5 2 v4 l-5 2 l-4-2z" fill="#F7B25A" stroke="#D07A1F" stroke-width="0.8"/><path d="M4 3 l4 2 l5-2 M8 5 v4" stroke="#D07A1F" stroke-width="0.6" fill="none"/><circle cx="12" cy="12" r="3.6" fill="#3AAE2E" stroke="#fff" stroke-width="0.8"/><path d="M10 12 h4 M12 10 v4" stroke="#fff" stroke-width="1.3"/></svg>
<div style="position:absolute;left:23px;top:154px;font-size:13.5px;line-height:15.5px;color:#000;white-space:nowrap;">[A]main/Level/level2.collection</div>
<svg style="position:absolute;left:6px;top:173px;" width="16" height="16" viewBox="0 0 16 16"><polygon points="14.83,6.47 14.83,9.53 12.93,8.86 12.09,10.88 13.91,11.75 11.75,13.91 10.88,12.09 8.86,12.93 9.53,14.83 6.47,14.83 7.14,12.93 5.12,12.09 4.25,13.91 2.09,11.75 3.91,10.88 3.07,8.86 1.17,9.53 1.17,6.47 3.07,7.14 3.91,5.12 2.09,4.25 4.25,2.09 5.12,3.91 7.14,3.07 6.47,1.17 9.53,1.17 8.86,3.07 10.88,3.91 11.75,2.09 13.91,4.25 12.09,5.12 12.93,7.14" fill="#C8C8C8" stroke="#9A9A9A" stroke-width="1"/><circle cx="8" cy="8" r="2.2" fill="#fff" stroke="#9A9A9A" stroke-width="1"/><path d="M4 14 l1-3 l7-7 l2 2 l-7 7z" fill="#F5A623" stroke="#9B6A1B" stroke-width="0.8"/><path d="M12 4 l1-1 l2 2 l-1 1z" fill="#E87FD0"/></svg>
<div style="position:absolute;left:23px;top:173px;font-size:13.5px;line-height:15.5px;color:#000;white-space:nowrap;">[M]main/Level/platoform/platform.script</div>
</div>
<div style="position:absolute;left:12px;top:975px;width:244px;height:18px;background:#F0F0F0;"></div>
<div style="position:absolute;left:30px;top:977px;width:165px;height:14px;background:#CDCDCD;"></div>
<svg style="position:absolute;left:16px;top:979px;" width="8" height="10" viewBox="0 0 8 10"><path d="M6 1 l-4 4 l4 4" fill="none" stroke="#606060" stroke-width="1.6"/></svg>
<svg style="position:absolute;left:242px;top:979px;" width="8" height="10" viewBox="0 0 8 10"><path d="M2 1 l4 4 l-4 4" fill="none" stroke="#606060" stroke-width="1.6"/></svg>
<div style="position:absolute;left:263px;top:51px;width:1144px;height:825px;border:1px solid #A0A0A0;border-radius:3px 3px 0 0;box-sizing:border-box;background:#EEEEEE;"></div>
<div style="position:absolute;left:264px;top:74px;width:1142px;height:1px;background:#A0A0A0;"></div>
<div style="position:absolute;left:263px;top:52px;width:128px;height:22px;border-right:1px solid #C4C4C4;box-sizing:border-box;"></div>
<svg style="position:absolute;left:267px;top:56px;" width="16" height="16" viewBox="0 0 16 16"><path d="M1.5 4.5 L8 1 L8 8.5 L1.5 12.5z" fill="#FF6A1A"/><path d="M8 1 L14.5 4.5 L14.5 12.5 L8 8.5z" fill="#14C4EE"/><path d="M1.5 12.5 L8 8.5 L14.5 12.5 L8 16z" fill="#14204A"/><path d="M5.5 7 L8 5.7 L8 11 L5.5 9.7z" fill="#1A8AF0"/><path d="M8 5.7 L10.5 7 L10.5 9.7 L8 11z" fill="#FFC800"/><path d="M3 5 l1.5 1 M12 4 l1 1.5" stroke="#fff" stroke-opacity="0.4" stroke-width="0.8"/></svg>
<div style="position:absolute;left:287px;top:56px;font-size:13px;line-height:15px;color:#000;white-space:nowrap;">game.project</div>
<div style="position:absolute;left:391px;top:52px;width:137px;height:22px;border-right:1px solid #C4C4C4;box-sizing:border-box;"></div>
<svg style="position:absolute;left:395px;top:56px;" width="16" height="16" viewBox="0 0 16 16"><path d="M1 10 l4-2 l5 2 v3.5 l-5 2 l-4-2z" fill="#9CCBF0" stroke="#4E8FC9" stroke-width="0.8"/><path d="M8 9 l3-1.5 l4 1.5 v3 l-4 2 l-3-1.5z" fill="#8BCB5B" stroke="#4F9A2C" stroke-width="0.8"/><path d="M4 3 l4-2 l5 2 v4 l-5 2 l-4-2z" fill="#F7B25A" stroke="#D07A1F" stroke-width="0.8"/><path d="M4 3 l4 2 l5-2 M8 5 v4" stroke="#D07A1F" stroke-width="0.6" fill="none"/></svg>
<div style="position:absolute;left:415px;top:56px;font-size:13px;line-height:15px;color:#000;white-space:nowrap;">main.collection</div>
<div style="position:absolute;left:528px;top:52px;width:135px;height:22px;border-right:1px solid #C4C4C4;box-sizing:border-box;"></div>
<svg style="position:absolute;left:532px;top:56px;" width="16" height="16" viewBox="0 0 16 16"><path d="M1 10 l4-2 l5 2 v3.5 l-5 2 l-4-2z" fill="#9CCBF0" stroke="#4E8FC9" stroke-width="0.8"/><path d="M8 9 l3-1.5 l4 1.5 v3 l-4 2 l-3-1.5z" fill="#8BCB5B" stroke="#4F9A2C" stroke-width="0.8"/><path d="M4 3 l4-2 l5 2 v4 l-5 2 l-4-2z" fill="#F7B25A" stroke="#D07A1F" stroke-width="0.8"/><path d="M4 3 l4 2 l5-2 M8 5 v4" stroke="#D07A1F" stroke-width="0.6" fill="none"/></svg>
<div style="position:absolute;left:552px;top:56px;font-size:13px;line-height:15px;color:#000;white-space:nowrap;">level.collection</div>
<div style="position:absolute;left:663px;top:52px;width:139px;height:22px;border-right:1px solid #C4C4C4;box-sizing:border-box;"></div>
<svg style="position:absolute;left:667px;top:56px;" width="16" height="16" viewBox="0 0 16 16"><polygon points="14.83,6.47 14.83,9.53 12.93,8.86 12.09,10.88 13.91,11.75 11.75,13.91 10.88,12.09 8.86,12.93 9.53,14.83 6.47,14.83 7.14,12.93 5.12,12.09 4.25,13.91 2.09,11.75 3.91,10.88 3.07,8.86 1.17,9.53 1.17,6.47 3.07,7.14 3.91,5.12 2.09,4.25 4.25,2.09 5.12,3.91 7.14,3.07 6.47,1.17 9.53,1.17 8.86,3.07 10.88,3.91 11.75,2.09 13.91,4.25 12.09,5.12 12.93,7.14" fill="#C8C8C8" stroke="#9A9A9A" stroke-width="1"/><circle cx="8" cy="8" r="2.2" fill="#fff" stroke="#9A9A9A" stroke-width="1"/></svg>
<div style="position:absolute;left:687px;top:56px;font-size:13px;line-height:15px;color:#000;white-space:nowrap;">controller.script</div>
<div style="position:absolute;left:802px;top:52px;width:112px;height:22px;border-right:1px solid #C4C4C4;box-sizing:border-box;"></div>
<svg style="position:absolute;left:806px;top:56px;" width="16" height="16" viewBox="0 0 16 16"><polygon points="14.83,6.47 14.83,9.53 12.93,8.86 12.09,10.88 13.91,11.75 11.75,13.91 10.88,12.09 8.86,12.93 9.53,14.83 6.47,14.83 7.14,12.93 5.12,12.09 4.25,13.91 2.09,11.75 3.91,10.88 3.07,8.86 1.17,9.53 1.17,6.47 3.07,7.14 3.91,5.12 2.09,4.25 4.25,2.09 5.12,3.91 7.14,3.07 6.47,1.17 9.53,1.17 8.86,3.07 10.88,3.91 11.75,2.09 13.91,4.25 12.09,5.12 12.93,7.14" fill="#C8C8C8" stroke="#9A9A9A" stroke-width="1"/><circle cx="8" cy="8" r="2.2" fill="#fff" stroke="#9A9A9A" stroke-width="1"/></svg>
<div style="position:absolute;left:826px;top:56px;font-size:13px;line-height:15px;color:#000;white-space:nowrap;">hero.script</div>
<div style="position:absolute;left:914px;top:52px;width:109px;height:22px;border-right:1px solid #C4C4C4;box-sizing:border-box;"></div>
<svg style="position:absolute;left:918px;top:56px;" width="16" height="16" viewBox="0 0 16 16"><rect x="1.5" y="1.5" width="8" height="8" fill="#3E9BE8" stroke="#3A6DB0"/><rect x="6.5" y="2.5" width="8" height="7" fill="#8CC24A" stroke="#3A6DB0"/><rect x="4.5" y="6.5" width="8" height="8" fill="#E83A1C" stroke="#3A6DB0" stroke-width="1.2"/><rect x="5.5" y="7.5" width="6" height="6" fill="#F05A24" stroke="#fff" stroke-width="1"/></svg>
<div style="position:absolute;left:938px;top:56px;font-size:13px;line-height:15px;color:#000;white-space:nowrap;">level.atlas</div>
<div style="position:absolute;left:1023px;top:52px;width:109px;height:22px;border-right:1px solid #C4C4C4;box-sizing:border-box;"></div>
<svg style="position:absolute;left:1027px;top:56px;" width="16" height="16" viewBox="0 0 16 16"><rect x="1.5" y="1.5" width="8" height="8" fill="#3E9BE8" stroke="#3A6DB0"/><rect x="6.5" y="2.5" width="8" height="7" fill="#8CC24A" stroke="#3A6DB0"/><rect x="4.5" y="6.5" width="8" height="8" fill="#E83A1C" stroke="#3A6DB0" stroke-width="1.2"/><rect x="5.5" y="7.5" width="6" height="6" fill="#F05A24" stroke="#fff" stroke-width="1"/></svg>
<div style="position:absolute;left:1047px;top:56px;font-size:13px;line-height:15px;color:#000;white-space:nowrap;">hero.atlas</div>
<div style="position:absolute;left:1132px;top:52px;width:92px;height:24px;background:#fff;border-left:1px solid #B0B0B0;border-right:1px solid #B0B0B0;border-radius:3px 3px 0 0;box-sizing:border-box;"></div>
<svg style="position:absolute;left:1136px;top:56px;" width="16" height="16" viewBox="0 0 16 16"><path d="M1.5 5 l6.5-3 l6.5 3 v6.5 l-6.5 3.5 l-6.5-3.5z" fill="#8EC3EF" stroke="#5A9BD6" stroke-width="1"/><path d="M1.5 5 l6.5 3 l6.5-3 M8 8 v7" stroke="#CFE6FA" stroke-width="1" fill="none"/><path d="M8 8 l6.5-3 v6.5 l-6.5 3.5z" fill="#6FAEE6"/></svg>
<div style="position:absolute;left:1156px;top:56px;font-size:13px;line-height:15px;color:#000;white-space:nowrap;">hero.go</div>
<svg style="position:absolute;left:1206px;top:57px;" width="12" height="12" viewBox="0 0 12 12"><path d="M1.5 3 l1.5-1.5 l3 3 l3-3 l1.5 1.5 l-3 3 l3 3 l-1.5 1.5 l-3-3 l-3 3 l-1.5-1.5 l3-3z" fill="#fff" stroke="#555" stroke-width="1"/></svg>
<div style="position:absolute;left:1372px;top:56px;width:10px;height:4px;border:1px solid #6A6A6A;box-sizing:border-box;background:#fff;"></div>
<svg style="position:absolute;left:1390px;top:56px;" width="11" height="11" viewBox="0 0 11 11"><rect x="0.5" y="0.5" width="10" height="10" fill="#fff" stroke="#6A6A6A"/><path d="M1 2.5 h9" stroke="#6A6A6A"/></svg>
<div style="position:absolute;left:264px;top:75px;width:1142px;height:800px;background:#fff;"></div>
<svg style="position:absolute;left:266px;top:77px" width="1138" height="796" viewBox="266 77 1138 796"><defs><linearGradient id="bg" x1="0" y1="0" x2="0" y2="1"><stop offset="0" stop-color="#7A8CA5"/><stop offset="1" stop-color="#1E2024"/></linearGradient><linearGradient id="rectg" gradientUnits="userSpaceOnUse" x1="0" y1="346" x2="0" y2="872"><stop offset="0" stop-color="#D8D556"/><stop offset="1" stop-color="#C6C13E"/></linearGradient><radialGradient id="bellyg" gradientUnits="userSpaceOnUse" cx="870" cy="397" r="215"><stop offset="0" stop-color="#F8F386"/><stop offset="0.3" stop-color="#E2F07C"/><stop offset="0.62" stop-color="#A0E56A"/><stop offset="0.85" stop-color="#7FE05C"/><stop offset="1" stop-color="#6CDA52"/></radialGradient><radialGradient id="lbodyg" gradientUnits="userSpaceOnUse" cx="712" cy="522" r="120"><stop offset="0" stop-color="#F6F28A"/><stop offset="0.45" stop-color="#DDEE7A"/><stop offset="1" stop-color="#86E262"/></radialGradient><radialGradient id="headg" gradientUnits="userSpaceOnUse" cx="1010" cy="330" r="170"><stop offset="0" stop-color="#52D42C"/><stop offset="1" stop-color="#2AB218"/></radialGradient><linearGradient id="capg" gradientUnits="userSpaceOnUse" x1="840" y1="210" x2="900" y2="290"><stop offset="0" stop-color="#FF0400"/><stop offset="0.45" stop-color="#FF2A00"/><stop offset="1" stop-color="#FF7200"/></linearGradient><linearGradient id="handg" gradientUnits="userSpaceOnUse" x1="512" y1="488" x2="634" y2="462"><stop offset="0" stop-color="#FF7A00"/><stop offset="0.5" stop-color="#FFE000"/><stop offset="1" stop-color="#FF8A00"/></linearGradient><linearGradient id="footLg" gradientUnits="userSpaceOnUse" x1="560" y1="790" x2="640" y2="760"><stop offset="0" stop-color="#FF8000"/><stop offset="0.55" stop-color="#FFE000"/><stop offset="1" stop-color="#FFA000"/></linearGradient><linearGradient id="footRg" gradientUnits="userSpaceOnUse" x1="775" y1="745" x2="860" y2="785"><stop offset="0" stop-color="#D86A10"/><stop offset="0.5" stop-color="#D4C018"/><stop offset="1" stop-color="#D8701A"/></linearGradient><linearGradient id="yband" gradientUnits="userSpaceOnUse" x1="615" y1="500" x2="700" y2="560"><stop offset="0" stop-color="#E8E818"/><stop offset="1" stop-color="#F6EC50"/></linearGradient><linearGradient id="blueg" gradientUnits="userSpaceOnUse" x1="590" y1="570" x2="620" y2="660"><stop offset="0" stop-color="#2F6BFF"/><stop offset="0.5" stop-color="#2E9AF8"/><stop offset="1" stop-color="#2F6BFF"/></linearGradient><linearGradient id="rarmg" gradientUnits="userSpaceOnUse" x1="902" y1="0" x2="968" y2="0"><stop offset="0" stop-color="#1A7A18"/><stop offset="1" stop-color="#34C01E"/></linearGradient></defs><rect x="266" y="77" width="1138" height="796" fill="url(#bg)"/><rect x="275" y="77" width="1" height="796" fill="rgba(119,125,131,0.13)"/><rect x="285" y="77" width="1" height="796" fill="rgba(119,125,131,0.13)"/><rect x="295" y="77" width="1" height="796" fill="rgba(119,125,131,0.13)"/><rect x="305" y="77" width="1" height="796" fill="rgba(119,125,131,0.13)"/><rect x="316" y="77" width="1" height="796" fill="rgba(119,125,131,0.13)"/><rect x="326" y="77" width="1" height="796" fill="rgba(119,125,131,0.13)"/><rect x="336" y="77" width="1" height="796" fill="rgba(119,125,131,0.68)"/><rect x="346" y="77" width="1" height="796" fill="rgba(119,125,131,0.13)"/><rect x="356" y="77" width="1" height="796" fill="rgba(119,125,131,0.13)"/><rect x="367" y="77" width="1" height="796" fill="rgba(119,125,131,0.13)"/><rect x="377" y="77" width="1" height="796" fill="rgba(119,125,131,0.13)"/><rect x="387" y="77" width="1" height="796" fill="rgba(119,125,131,0.13)"/><rect x="397" y="77" width="1" height="796" fill="rgba(119,125,131,0.13)"/><rect x="407" y="77" width="1" height="796" fill="rgba(119,125,131,0.13)"/><rect x="417" y="77" width="1" height="796" fill="rgba(119,125,131,0.13)"/><rect x="428" y="77" width="1" height="796" fill="rgba(119,125,131,0.13)"/><rect x="438" y="77" width="1" height="796" fill="rgba(119,125,131,0.68)"/><rect x="448" y="77" width="1" height="796" fill="rgba(119,125,131,0.13)"/><rect x="458" y="77" width="1" height="796" fill="rgba(119,125,131,0.13)"/><rect x="468" y="77" width="1" height="796" fill="rgba(119,125,131,0.13)"/><rect x="479" y="77" width="1" height="796" fill="rgba(119,125,131,0.13)"/><rect x="489" y="77" width="1" height="796" fill="rgba(119,125,131,0.13)"/><rect x="499" y="77" width="1" height="796" fill="rgba(119,125,131,0.13)"/><rect x="509" y="77" width="1" height="796" fill="rgba(119,125,131,0.13)"/><rect x="519" y="77" width="1" height="796" fill="rgba(119,125,131,0.13)"/><rect x="529" y="77" width="1" height="796" fill="rgba(119,125,131,0.13)"/><rect x="540" y="77" width="1" height="796" fill="rgba(119,125,131,0.68)"/><rect x="550" y="77" width="1" height="796" fill="rgba(119,125,131,0.13)"/><rect x="560" y="77" width="1" height="796" fill="rgba(119,125,131,0.13)"/><rect x="570" y="77" width="1" height="796" fill="rgba(119,125,131,0.13)"/><rect x="580" y="77" width="1" height="796" fill="rgba(119,125,131,0.13)"/><rect x="591" y="77" width="1" height="796" fill="rgba(119,125,131,0.13)"/><rect x="601" y="77" width="1" height="796" fill="rgba(119,125,131,0.13)"/><rect x="611" y="77" width="1" height="796" fill="rgba(119,125,131,0.13)"/><rect x="621" y="77" width="1" height="796" fill="rgba(119,125,131,0.13)"/><rect x="631" y="77" width="1" height="796" fill="rgba(119,125,131,0.13)"/><rect x="641" y="77" width="1" height="796" fill="rgba(119,125,131,0.68)"/><rect x="652" y="77" width="1" height="796" fill="rgba(119,125,131,0.13)"/><rect x="662" y="77" width="1" height="796" fill="rgba(119,125,131,0.13)"/><rect x="672" y="77" width="1" height="796" fill="rgba(119,125,131,0.13)"/><rect x="682" y="77" width="1" height="796" fill="rgba(119,125,131,0.13)"/><rect x="692" y="77" width="1" height="796" fill="rgba(119,125,131,0.13)"/><rect x="703" y="77" width="1" height="796" fill="rgba(119,125,131,0.13)"/><rect x="713" y="77" width="1" height="796" fill="rgba(119,125,131,0.13)"/><rect x="723" y="77" width="1" height="796" fill="rgba(119,125,131,0.13)"/><rect x="733" y="77" width="1" height="796" fill="rgba(119,125,131,0.13)"/><rect x="743" y="77" width="1" height="796" fill="rgba(119,125,131,0.68)"/><rect x="754" y="77" width="1" height="796" fill="rgba(119,125,131,0.13)"/><rect x="764" y="77" width="1" height="796" fill="rgba(119,125,131,0.13)"/><rect x="774" y="77" width="1" height="796" fill="rgba(119,125,131,0.13)"/><rect x="784" y="77" width="1" height="796" fill="rgba(119,125,131,0.13)"/><rect x="794" y="77" width="1" height="796" fill="rgba(119,125,131,0.13)"/><rect x="804" y="77" width="1" height="796" fill="rgba(119,125,131,0.13)"/><rect x="815" y="77" width="1" height="796" fill="rgba(119,125,131,0.13)"/><rect x="825" y="77" width="1" height="796" fill="rgba(119,125,131,0.13)"/><rect x="835" y="77" width="1" height="796" fill="rgba(119,125,131,0.13)"/><rect x="845" y="77" width="1" height="796" fill="rgba(119,125,131,0.68)"/><rect x="855" y="77" width="1" height="796" fill="rgba(119,125,131,0.13)"/><rect x="866" y="77" width="1" height="796" fill="rgba(119,125,131,0.13)"/><rect x="876" y="77" width="1" height="796" fill="rgba(119,125,131,0.13)"/><rect x="886" y="77" width="1" height="796" fill="rgba(119,125,131,0.13)"/><rect x="896" y="77" width="1" height="796" fill="rgba(119,125,131,0.13)"/><rect x="906" y="77" width="1" height="796" fill="rgba(119,125,131,0.13)"/><rect x="916" y="77" width="1" height="796" fill="rgba(119,125,131,0.13)"/><rect x="927" y="77" width="1" height="796" fill="rgba(119,125,131,0.13)"/><rect x="937" y="77" width="1" height="796" fill="rgba(119,125,131,0.13)"/><rect x="947" y="77" width="1" height="796" fill="rgba(119,125,131,0.68)"/><rect x="957" y="77" width="1" height="796" fill="rgba(119,125,131,0.13)"/><rect x="967" y="77" width="1" height="796" fill="rgba(119,125,131,0.13)"/><rect x="978" y="77" width="1" height="796" fill="rgba(119,125,131,0.13)"/><rect x="988" y="77" width="1" height="796" fill="rgba(119,125,131,0.13)"/><rect x="998" y="77" width="1" height="796" fill="rgba(119,125,131,0.13)"/><rect x="1008" y="77" width="1" height="796" fill="rgba(119,125,131,0.13)"/><rect x="1018" y="77" width="1" height="796" fill="rgba(119,125,131,0.13)"/><rect x="1028" y="77" width="1" height="796" fill="rgba(119,125,131,0.13)"/><rect x="1039" y="77" width="1" height="796" fill="rgba(119,125,131,0.13)"/><rect x="1049" y="77" width="1" height="796" fill="rgba(119,125,131,0.68)"/><rect x="1059" y="77" width="1" height="796" fill="rgba(119,125,131,0.13)"/><rect x="1069" y="77" width="1" height="796" fill="rgba(119,125,131,0.13)"/><rect x="1079" y="77" width="1" height="796" fill="rgba(119,125,131,0.13)"/><rect x="1090" y="77" width="1" height="796" fill="rgba(119,125,131,0.13)"/><rect x="1100" y="77" width="1" height="796" fill="rgba(119,125,131,0.13)"/><rect x="1110" y="77" width="1" height="796" fill="rgba(119,125,131,0.13)"/><rect x="1120" y="77" width="1" height="796" fill="rgba(119,125,131,0.13)"/><rect x="1130" y="77" width="1" height="796" fill="rgba(119,125,131,0.13)"/><rect x="1140" y="77" width="1" height="796" fill="rgba(119,125,131,0.13)"/><rect x="1151" y="77" width="1" height="796" fill="rgba(119,125,131,0.68)"/><rect x="1161" y="77" width="1" height="796" fill="rgba(119,125,131,0.13)"/><rect x="1171" y="77" width="1" height="796" fill="rgba(119,125,131,0.13)"/><rect x="1181" y="77" width="1" height="796" fill="rgba(119,125,131,0.13)"/><rect x="1191" y="77" width="1" height="796" fill="rgba(119,125,131,0.13)"/><rect x="1202" y="77" width="1" height="796" fill="rgba(119,125,131,0.13)"/><rect x="1212" y="77" width="1" height="796" fill="rgba(119,125,131,0.13)"/><rect x="1222" y="77" width="1" height="796" fill="rgba(119,125,131,0.13)"/><rect x="1232" y="77" width="1" height="796" fill="rgba(119,125,131,0.13)"/><rect x="1242" y="77" width="1" height="796" fill="rgba(119,125,131,0.13)"/><rect x="1252" y="77" width="1" height="796" fill="rgba(119,125,131,0.68)"/><rect x="1263" y="77" width="1" height="796" fill="rgba(119,125,131,0.13)"/><rect x="1273" y="77" width="1" height="796" fill="rgba(119,125,131,0.13)"/><rect x="1283" y="77" width="1" height="796" fill="rgba(119,125,131,0.13)"/><rect x="1293" y="77" width="1" height="796" fill="rgba(119,125,131,0.13)"/><rect x="1303" y="77" width="1" height="796" fill="rgba(119,125,131,0.13)"/><rect x="1314" y="77" width="1" height="796" fill="rgba(119,125,131,0.13)"/><rect x="1324" y="77" width="1" height="796" fill="rgba(119,125,131,0.13)"/><rect x="1334" y="77" width="1" height="796" fill="rgba(119,125,131,0.13)"/><rect x="1344" y="77" width="1" height="796" fill="rgba(119,125,131,0.13)"/><rect x="1354" y="77" width="1" height="796" fill="rgba(119,125,131,0.68)"/><rect x="1364" y="77" width="1" height="796" fill="rgba(119,125,131,0.13)"/><rect x="1375" y="77" width="1" height="796" fill="rgba(119,125,131,0.13)"/><rect x="1385" y="77" width="1" height="796" fill="rgba(119,125,131,0.13)"/><rect x="1395" y="77" width="1" height="796" fill="rgba(119,125,131,0.13)"/><rect x="266" y="80" width="1138" height="1" fill="rgba(119,125,131,0.13)"/><rect x="266" y="90" width="1138" height="1" fill="rgba(119,125,131,0.13)"/><rect x="266" y="101" width="1138" height="1" fill="rgba(119,125,131,0.68)"/><rect x="266" y="111" width="1138" height="1" fill="rgba(119,125,131,0.13)"/><rect x="266" y="121" width="1138" height="1" fill="rgba(119,125,131,0.13)"/><rect x="266" y="131" width="1138" height="1" fill="rgba(119,125,131,0.13)"/><rect x="266" y="141" width="1138" height="1" fill="rgba(119,125,131,0.13)"/><rect x="266" y="152" width="1138" height="1" fill="rgba(119,125,131,0.13)"/><rect x="266" y="162" width="1138" height="1" fill="rgba(119,125,131,0.13)"/><rect x="266" y="172" width="1138" height="1" fill="rgba(119,125,131,0.13)"/><rect x="266" y="182" width="1138" height="1" fill="rgba(119,125,131,0.13)"/><rect x="266" y="192" width="1138" height="1" fill="rgba(119,125,131,0.13)"/><rect x="266" y="203" width="1138" height="1" fill="rgba(119,125,131,0.68)"/><rect x="266" y="213" width="1138" height="1" fill="rgba(119,125,131,0.13)"/><rect x="266" y="223" width="1138" height="1" fill="rgba(119,125,131,0.13)"/><rect x="266" y="233" width="1138" height="1" fill="rgba(119,125,131,0.13)"/><rect x="266" y="243" width="1138" height="1" fill="rgba(119,125,131,0.13)"/><rect x="266" y="253" width="1138" height="1" fill="rgba(119,125,131,0.13)"/><rect x="266" y="264" width="1138" height="1" fill="rgba(119,125,131,0.13)"/><rect x="266" y="274" width="1138" height="1" fill="rgba(119,125,131,0.13)"/><rect x="266" y="284" width="1138" height="1" fill="rgba(119,125,131,0.13)"/><rect x="266" y="294" width="1138" height="1" fill="rgba(119,125,131,0.13)"/><rect x="266" y="304" width="1138" height="1" fill="rgba(119,125,131,0.68)"/><rect x="266" y="315" width="1138" height="1" fill="rgba(119,125,131,0.13)"/><rect x="266" y="325" width="1138" height="1" fill="rgba(119,125,131,0.13)"/><rect x="266" y="335" width="1138" height="1" fill="rgba(119,125,131,0.13)"/><rect x="266" y="345" width="1138" height="1" fill="rgba(119,125,131,0.13)"/><rect x="266" y="355" width="1138" height="1" fill="rgba(119,125,131,0.13)"/><rect x="266" y="365" width="1138" height="1" fill="rgba(119,125,131,0.13)"/><rect x="266" y="376" width="1138" height="1" fill="rgba(119,125,131,0.13)"/><rect x="266" y="386" width="1138" height="1" fill="rgba(119,125,131,0.13)"/><rect x="266" y="396" width="1138" height="1" fill="rgba(119,125,131,0.13)"/><rect x="266" y="406" width="1138" height="1" fill="rgba(119,125,131,0.68)"/><rect x="266" y="416" width="1138" height="1" fill="rgba(119,125,131,0.13)"/><rect x="266" y="427" width="1138" height="1" fill="rgba(119,125,131,0.13)"/><rect x="266" y="437" width="1138" height="1" fill="rgba(119,125,131,0.13)"/><rect x="266" y="447" width="1138" height="1" fill="rgba(119,125,131,0.13)"/><rect x="266" y="457" width="1138" height="1" fill="rgba(119,125,131,0.13)"/><rect x="266" y="467" width="1138" height="1" fill="rgba(119,125,131,0.13)"/><rect x="266" y="477" width="1138" height="1" fill="rgba(119,125,131,0.13)"/><rect x="266" y="488" width="1138" height="1" fill="rgba(119,125,131,0.13)"/><rect x="266" y="498" width="1138" height="1" fill="rgba(119,125,131,0.13)"/><rect x="266" y="508" width="1138" height="1" fill="rgba(119,125,131,0.68)"/><rect x="266" y="518" width="1138" height="1" fill="rgba(119,125,131,0.13)"/><rect x="266" y="528" width="1138" height="1" fill="rgba(119,125,131,0.13)"/><rect x="266" y="539" width="1138" height="1" fill="rgba(119,125,131,0.13)"/><rect x="266" y="549" width="1138" height="1" fill="rgba(119,125,131,0.13)"/><rect x="266" y="559" width="1138" height="1" fill="rgba(119,125,131,0.13)"/><rect x="266" y="569" width="1138" height="1" fill="rgba(119,125,131,0.13)"/><rect x="266" y="579" width="1138" height="1" fill="rgba(119,125,131,0.13)"/><rect x="266" y="589" width="1138" height="1" fill="rgba(119,125,131,0.13)"/><rect x="266" y="600" width="1138" height="1" fill="rgba(119,125,131,0.13)"/><rect x="266" y="610" width="1138" height="1" fill="rgba(119,125,131,0.68)"/><rect x="266" y="620" width="1138" height="1" fill="rgba(119,125,131,0.13)"/><rect x="266" y="630" width="1138" height="1" fill="rgba(119,125,131,0.13)"/><rect x="266" y="640" width="1138" height="1" fill="rgba(119,125,131,0.13)"/><rect x="266" y="651" width="1138" height="1" fill="rgba(119,125,131,0.13)"/><rect x="266" y="661" width="1138" height="1" fill="rgba(119,125,131,0.13)"/><rect x="266" y="671" width="1138" height="1" fill="rgba(119,125,131,0.13)"/><rect x="266" y="681" width="1138" height="1" fill="rgba(119,125,131,0.13)"/><rect x="266" y="691" width="1138" height="1" fill="rgba(119,125,131,0.13)"/><rect x="266" y="701" width="1138" height="1" fill="rgba(119,125,131,0.13)"/><rect x="266" y="712" width="1138" height="1" fill="rgba(119,125,131,0.68)"/><rect x="266" y="722" width="1138" height="1" fill="rgba(119,125,131,0.13)"/><rect x="266" y="732" width="1138" height="1" fill="rgba(119,125,131,0.13)"/><rect x="266" y="742" width="1138" height="1" fill="rgba(119,125,131,0.13)"/><rect x="266" y="752" width="1138" height="1" fill="rgba(119,125,131,0.13)"/><rect x="266" y="763" width="1138" height="1" fill="rgba(119,125,131,0.13)"/><rect x="266" y="773" width="1138" height="1" fill="rgba(119,125,131,0.13)"/><rect x="266" y="783" width="1138" height="1" fill="rgba(119,125,131,0.13)"/><rect x="266" y="793" width="1138" height="1" fill="rgba(119,125,131,0.13)"/><rect x="266" y="803" width="1138" height="1" fill="rgba(119,125,131,0.13)"/><rect x="266" y="813" width="1138" height="1" fill="rgba(119,125,131,0.68)"/><rect x="266" y="824" width="1138" height="1" fill="rgba(119,125,131,0.13)"/><rect x="266" y="834" width="1138" height="1" fill="rgba(119,125,131,0.13)"/><rect x="266" y="844" width="1138" height="1" fill="rgba(119,125,131,0.13)"/><rect x="266" y="854" width="1138" height="1" fill="rgba(119,125,131,0.13)"/><rect x="266" y="864" width="1138" height="1" fill="rgba(119,125,131,0.13)"/><rect x="266" y="508" width="1138" height="1" fill="#E01818"/><rect x="744" y="77" width="1" height="796" fill="#18F018"/><rect x="464" y="345" width="439" height="540" fill="url(#rectg)" fill-opacity="0.86"/><polygon points="863.5,83.5 960.7,102.8 1043.1,157.9 1098.2,240.3 1117.5,337.5 1098.2,434.7 1043.1,517.1 960.7,572.2 863.5,591.5 766.3,572.2 683.9,517.1 628.8,434.7 609.5,337.5 628.8,240.3 683.9,157.9 766.3,102.8" fill="#DED85E" fill-opacity="0.85"/><polygon points="863.5,591.5 863.5,572.2 863.5,517.1 863.5,434.7 863.5,337.5 863.5,240.3 863.5,157.9 863.5,102.8 863.5,83.5 863.5,83.5 953.3,102.8 1029.4,157.9 1080.3,240.3 1098.2,337.5 1080.3,434.7 1029.4,517.1 953.3,572.2 863.5,591.5" fill="#F0E850" fill-opacity="0.6"/><polygon points="863.5,591.5 953.3,572.2 1029.4,517.1 1080.3,434.7 1098.2,337.5 1080.3,240.3 1029.4,157.9 953.3,102.8 863.5,83.5 863.5,83.5 960.7,102.8 1043.1,157.9 1098.2,240.3 1117.5,337.5 1098.2,434.7 1043.1,517.1 960.7,572.2 863.5,591.5" fill="#5F6878" fill-opacity="0.34"/><polygon points="631.0,342.0 633.8,313.0 641.0,289.0 653.0,265.0 672.0,245.7 696.0,228.8 735.0,209.6 761.5,207.0 766.0,192.7 781.0,166.0 804.0,151.7 828.0,146.9 864.0,145.7 891.0,146.9 915.0,159.0 929.5,171.0 939.0,183.0 958.4,187.9 972.9,202.3 982.5,221.6 989.0,242.7 1006.0,251.2 1031.5,270.3 1057.0,285.0 1082.4,306.4 1095.2,319.0 1103.6,340.3 1105.8,374.3 1097.3,395.5 1086.7,408.2 1074.0,427.3 1054.9,442.1 1035.4,445.3 1020.4,465.3 1015.4,477.8 1025.4,487.9 1020.4,515.4 995.3,520.5 960.3,528.0 925.2,535.5 890.0,530.5 860.0,520.5 834.0,518.0 828.0,560.0 810.0,590.0 790.0,610.0 753.0,634.0 700.0,644.0 652.6,645.2 610.0,600.0 590.0,550.0 640.0,445.0 652.0,437.0 645.0,425.0 638.0,400.0 633.0,370.0" fill="none" stroke="#4A5A20" stroke-opacity="0.5" stroke-width="5" stroke-linejoin="round"/><polygon points="476.0,455.6 505.0,440.0 544.0,428.0 596.0,420.4 622.0,423.0 634.0,427.8 671.5,437.0 699.0,446.0 727.0,460.0 741.0,474.0 738.0,482.0 700.0,485.0 660.0,487.0 634.0,490.0 600.0,497.0 583.0,500.0 570.0,515.0 567.0,536.0 547.0,540.0 541.5,516.0 497.0,525.0 494.6,501.0 476.0,498.5 474.0,487.0 484.0,466.0" fill="none" stroke="#4A5A20" stroke-opacity="0.5" stroke-width="5" stroke-linejoin="round"/><polygon points="565.0,562.0 562.0,600.0 560.0,631.5 574.0,659.0 555.0,690.0 537.0,724.0 533.5,758.7 533.5,794.8 549.0,840.0 574.0,862.5 587.7,867.0 596.7,853.5 615.0,858.0 630.6,858.0 646.4,835.4 651.0,822.0 666.7,808.0 669.0,797.0 639.6,774.5 628.0,751.0 611.0,736.0 601.8,709.4 611.0,694.4 640.0,669.0 651.5,646.0 653.0,631.5 648.0,594.0 625.0,557.0" fill="none" stroke="#4A5A20" stroke-opacity="0.5" stroke-width="5" stroke-linejoin="round"/><polygon points="750.0,594.0 755.0,641.0 773.0,678.0 759.0,700.0 754.8,734.0 759.3,785.8 775.0,817.4 797.7,840.0 809.0,849.0 820.0,835.4 840.5,835.4 852.0,831.0 865.0,813.0 881.0,794.8 885.7,776.7 867.6,767.7 824.7,740.6 800.0,722.6 810.0,705.5 833.5,659.0 838.0,613.0 824.0,585.0 790.0,590.0" fill="none" stroke="#4A5A20" stroke-opacity="0.5" stroke-width="5" stroke-linejoin="round"/><polygon points="631.0,342.0 633.8,313.0 641.0,289.0 653.0,265.0 672.0,245.7 696.0,228.8 735.0,209.6 761.5,207.0 766.0,192.7 781.0,166.0 804.0,151.7 828.0,146.9 864.0,145.7 891.0,146.9 915.0,159.0 929.5,171.0 939.0,183.0 958.4,187.9 972.9,202.3 982.5,221.6 989.0,242.7 1006.0,251.2 1031.5,270.3 1057.0,285.0 1082.4,306.4 1095.2,319.0 1103.6,340.3 1105.8,374.3 1097.3,395.5 1086.7,408.2 1074.0,427.3 1054.9,442.1 1035.4,445.3 1020.4,465.3 1015.4,477.8 1025.4,487.9 1020.4,515.4 995.3,520.5 960.3,528.0 925.2,535.5 890.0,530.5 860.0,520.5 834.0,518.0 828.0,560.0 810.0,590.0 790.0,610.0 753.0,634.0 700.0,644.0 652.6,645.2 610.0,600.0 590.0,550.0 640.0,445.0 652.0,437.0 645.0,425.0 638.0,400.0 633.0,370.0" fill="#0B3B06" /><polygon points="667.7,340.0 672.3,318.0 682.0,286.7 703.7,262.6 720.5,250.0 745.0,241.0 768.0,240.0 790.0,215.0 840.0,180.0 880.0,175.0 930.0,185.0 975.0,215.0 990.0,250.0 991.2,283.0 1006.0,285.2 1027.3,300.0 1048.5,310.6 1065.5,329.7 1074.0,346.7 1074.0,368.0 1065.5,387.0 1046.0,412.0 1030.0,432.0 1000.0,450.0 955.0,465.0 875.3,480.4 810.8,490.9 801.2,527.5 791.5,546.8 772.2,575.8 753.0,591.2 739.4,604.7 724.0,612.4 656.5,614.4 646.8,595.0 637.2,568.0 617.9,556.5 608.2,537.2 608.2,508.2 617.9,494.7 646.8,483.0 704.0,452.0 697.0,440.0 683.0,417.0 672.0,390.0" fill="url(#bellyg)" /><polygon points="612.0,500.0 640.0,487.0 680.0,481.0 720.0,482.0 700.0,495.0 670.0,505.0 645.0,520.0 632.0,545.0 640.0,568.0 618.0,556.0 609.0,537.0 609.0,508.0" fill="url(#yband)" /><polygon points="608.0,508.0 617.0,495.0 640.0,486.0 632.0,500.0 622.0,520.0 620.0,545.0 628.0,562.0 618.0,556.0 608.0,537.0" fill="#34BE1C" /><polygon points="667.7,340.0 672.3,318.0 682.0,286.7 703.7,262.6 720.5,250.0 745.0,241.0 768.0,240.0 790.0,215.0 840.0,180.0 880.0,175.0 930.0,185.0 975.0,215.0 990.0,250.0 991.2,283.0 1006.0,285.2 1027.3,300.0 1048.5,310.6 1065.5,329.7 1074.0,346.7 1074.0,368.0 1060.0,395.0 1048.5,399.7 1027.3,393.3 985.0,387.0 942.4,382.7 915.0,368.7 891.0,356.6 864.4,342.0 838.0,323.0 816.0,313.0 768.8,306.0 720.5,308.4 684.0,323.0 672.0,345.0" fill="url(#headg)" /><polygon points="736.0,270.0 742.0,250.0 750.0,241.0 770.0,241.0 786.0,262.0 831.0,263.0 860.0,268.0 874.0,274.0 888.0,280.0 902.6,288.0 908.0,295.0 914.0,305.0 919.7,313.0 927.0,320.0 935.0,325.0 950.0,325.0 938.0,331.0 924.0,324.0 909.7,314.0 895.5,303.0 874.0,293.0 845.6,288.0 802.8,283.0 768.8,282.0 738.0,287.0" fill="#2F7C1C" /><polygon points="765.7,183.6 773.8,175.5 780.5,167.4 794.0,158.0 805.0,148.5 828.0,147.0 861.6,145.8 892.7,145.0 915.0,159.0 929.5,171.0 939.0,183.0 958.4,187.9 972.9,202.3 982.5,221.6 987.3,241.0 989.7,265.0 991.0,284.3 988.0,303.6 975.0,316.0 958.0,326.0 934.3,328.0 922.0,322.0 910.0,300.0 900.0,288.0 860.0,266.0 800.0,264.0 786.0,266.0 760.0,265.0 765.7,205.0" fill="#2C0000" stroke="#5A3A10" stroke-opacity="0.5" stroke-width="2" stroke-linejoin="round"/><polygon points="786.0,261.0 784.6,254.0 784.6,229.6 791.0,216.0 798.0,208.0 806.0,198.5 821.0,189.0 837.0,179.6 861.6,178.0 883.0,177.0 900.0,185.0 915.0,190.3 934.3,200.0 948.8,209.6 962.5,228.5 971.0,240.0 980.0,250.0 986.0,257.0 986.0,285.6 983.0,297.0 974.0,305.5 962.5,314.0 949.7,321.0 935.4,321.0 927.0,317.0 919.7,310.0 914.0,302.0 908.0,292.7 902.6,285.6 888.0,276.0 874.0,270.0 860.0,264.6 831.0,259.0" fill="url(#capg)" /><polygon points="938.0,200.0 952.5,214.0 962.5,228.5 971.0,240.0 980.0,250.0 986.0,257.0 986.0,285.6 983.0,297.0 976.0,302.0 978.0,260.0 968.0,238.0 950.0,214.0" fill="#D80000" fill-opacity="0.7"/><polygon points="962.0,228.0 980.0,250.0 986.0,257.0 986.0,285.6 983.0,297.0 974.0,305.5 962.5,314.0 949.7,321.0 935.4,321.0 927.0,317.0 919.7,310.0 924.0,298.4 940.0,305.0 956.8,304.0 966.0,298.0 973.0,285.0 972.5,257.0 963.0,242.0" fill="#E80600" /><polygon points="931.0,231.0 951.0,233.0 963.0,242.0 972.5,257.0 973.0,285.0 966.0,298.0 956.8,304.0 940.0,305.0 924.0,298.4 912.0,288.0 908.0,270.0 908.0,250.0 915.0,236.0" fill="#0C0000" /><rect x="914" y="233" width="17" height="24" fill="#F0F0F0"/><rect x="914" y="233" width="8" height="8" fill="#C8A8A0"/><rect x="914" y="249" width="8" height="8" fill="#D8D8D8"/><rect x="931" y="233" width="8" height="23" fill="#4A4040"/><polyline points="838.0,323.0 864.4,342.0 891.0,356.6 915.0,368.7" fill="none" stroke="#1E4A10" stroke-width="4" stroke-opacity="0.85" stroke-linejoin="round"/><polyline points="912.0,367.0 942.4,381.0 985.0,387.0 1027.3,392.0 1048.5,398.0 1068.0,396.0" fill="none" stroke="#0B3B06" stroke-width="5.5" stroke-linejoin="round"/><polygon points="860.0,503.0 900.0,497.0 960.0,488.0 1000.0,480.0 1020.0,475.0 1026.0,490.0 1021.0,515.0 995.0,520.0 960.0,528.0 925.0,535.0 890.0,530.0 860.0,521.0" fill="#0B3B06" /><polygon points="902.0,507.0 968.0,494.0 972.0,514.0 905.0,522.0" fill="url(#rarmg)" /><polygon points="968.0,492.0 985.0,486.0 997.0,487.0 990.0,510.0 972.0,514.0" fill="#E07A1C" /><polygon points="877.0,511.0 902.0,507.0 905.0,521.0 879.0,520.0" fill="#1C5A4A" /><polygon points="560.0,488.0 615.0,488.0 611.0,515.0 602.0,553.0 590.0,562.0 560.0,566.0" fill="#0B3B06" /><polygon points="476.0,455.6 505.0,440.0 544.0,428.0 596.0,420.4 622.0,423.0 634.0,427.8 671.5,437.0 699.0,446.0 727.0,460.0 741.0,474.0 738.0,482.0 700.0,485.0 660.0,487.0 634.0,490.0 600.0,497.0 583.0,500.0 570.0,515.0 567.0,536.0 547.0,540.0 541.5,516.0 497.0,525.0 494.6,501.0 476.0,498.5 474.0,487.0 484.0,466.0" fill="#0B3B06" /><polygon points="509.0,457.0 518.0,454.0 544.0,451.7 549.0,467.0 627.0,449.0 634.0,459.5 634.0,467.3 583.0,488.0 579.0,504.0 567.6,513.0 560.0,501.0 522.0,505.0 511.6,483.0" fill="url(#handg)" /><polygon points="500.0,454.0 512.0,451.0 515.0,460.0 503.0,463.0" fill="#FF7A10" /><polygon points="497.0,478.0 512.0,475.0 515.0,485.0 500.0,489.0" fill="#FF7A10" /><polygon points="518.0,497.0 530.0,494.0 533.0,505.0 521.0,508.0" fill="#FF7A10" /><polygon points="544.0,453.0 622.0,438.6 627.5,449.0 549.0,467.3" fill="#2DB81A" /><polygon points="620.0,443.0 660.0,448.0 710.0,458.0 706.0,475.0 660.0,472.0 635.0,470.0 631.0,460.0" fill="#3282FF" /><polygon points="705.0,457.0 727.0,462.0 738.0,474.0 736.0,482.0 704.0,478.0" fill="#2DB81A" /><polygon points="611.0,515.7 625.0,500.0 660.0,488.0 700.0,484.0 740.0,480.0 810.0,490.0 824.0,502.0 805.7,552.8 782.6,576.0 741.0,603.7 657.6,613.0 634.4,585.0 602.0,552.8" fill="url(#lbodyg)" /><polygon points="616.0,497.0 662.0,488.0 710.0,490.0 700.0,505.0 671.5,520.0 645.0,545.0 636.0,565.0 616.0,548.0" fill="url(#yband)" /><polygon points="611.0,502.0 625.0,492.6 616.0,520.0 616.0,539.0 624.0,552.0 602.0,552.8 606.0,530.0" fill="#33BC1C" /><polygon points="565.0,562.0 562.0,600.0 560.0,631.5 574.0,659.0 555.0,690.0 537.0,724.0 533.5,758.7 533.5,794.8 549.0,840.0 574.0,862.5 587.7,867.0 596.7,853.5 615.0,858.0 630.6,858.0 646.4,835.4 651.0,822.0 666.7,808.0 669.0,797.0 639.6,774.5 628.0,751.0 611.0,736.0 601.8,709.4 611.0,694.4 640.0,669.0 651.5,646.0 653.0,631.5 648.0,594.0 625.0,557.0" fill="#0B3B06" /><polygon points="579.0,565.0 596.0,553.0 612.0,560.0 626.0,580.0 634.0,610.0 628.0,640.0 614.0,664.0 598.0,675.0 580.0,660.0 574.0,630.0 574.0,595.0" fill="url(#blueg)" /><polygon points="612.0,560.0 626.0,568.0 640.0,592.0 642.0,620.0 632.0,650.0 616.0,670.0 598.0,680.0 588.0,700.0 578.0,735.0 570.0,740.0 576.0,705.0 598.0,675.0 614.0,664.0 628.0,640.0 634.0,610.0 626.0,580.0" fill="#2DB81A" /><polygon points="598.0,675.0 588.0,700.0 576.0,725.0 560.0,748.0 551.0,740.0 562.0,712.0 578.0,685.0 590.0,672.0" fill="#2F7CF0" /><polygon points="557.7,747.4 575.0,740.4 589.0,745.0 603.0,761.0 626.0,781.0 647.0,799.4 649.0,806.0 640.0,813.0 632.0,817.0 629.0,830.0 622.0,837.0 612.0,836.0 592.0,836.0 586.0,842.0 576.0,841.0 563.0,818.0 556.0,790.0 554.0,765.0" fill="url(#footLg)" /><g stroke="#0B3B06" stroke-width="4" fill="none"><line x1="601" y1="790" x2="646" y2="816"/><line x1="580" y1="807" x2="617" y2="840"/></g><polygon points="750.0,594.0 755.0,641.0 773.0,678.0 759.0,700.0 754.8,734.0 759.3,785.8 775.0,817.4 797.7,840.0 809.0,849.0 820.0,835.4 840.5,835.4 852.0,831.0 865.0,813.0 881.0,794.8 885.7,776.7 867.6,767.7 824.7,740.6 800.0,722.6 810.0,705.5 833.5,659.0 838.0,613.0 824.0,585.0 790.0,590.0" fill="#0B3B06" /><polygon points="764.0,603.7 810.0,594.0 824.0,631.5 801.0,687.0 792.0,733.0 773.0,728.7 782.6,687.0 768.7,640.7" fill="#2E9A48" /><polygon points="768.0,734.0 773.0,729.0 813.5,756.0 850.0,774.0 867.0,783.0 862.0,797.0 852.0,806.0 849.0,816.0 840.0,822.0 810.0,822.0 808.0,829.0 798.0,829.0 780.0,800.0 768.0,770.0" fill="url(#footRg)" /><g stroke="#0B3B06" stroke-width="4" fill="none"><line x1="818" y1="778" x2="866" y2="800"/><line x1="798" y1="798" x2="846" y2="824"/></g><g stroke="#2B1A7A" stroke-width="1.1"><polyline points="766.3,102.8 773.7,102.8 794.8,102.8 826.3,102.8 863.5,102.8 900.7,102.8 932.2,102.8 953.3,102.8 960.7,102.8" fill="none"/><polyline points="683.9,157.9 697.6,157.9 736.5,157.9 794.8,157.9 863.5,157.9 932.2,157.9 990.5,157.9 1029.4,157.9 1043.1,157.9" fill="none"/><polyline points="628.8,240.3 646.7,240.3 697.6,240.3 773.7,240.3 863.5,240.3 953.3,240.3 1029.4,240.3 1080.3,240.3 1098.2,240.3" fill="none"/><polyline points="609.5,337.5 628.8,337.5 683.9,337.5 766.3,337.5 863.5,337.5 960.7,337.5 1043.1,337.5 1098.2,337.5 1117.5,337.5" fill="none"/><polyline points="628.8,434.7 646.7,434.7 697.6,434.7 773.7,434.7 863.5,434.7 953.3,434.7 1029.4,434.7 1080.3,434.7 1098.2,434.7" fill="none"/><polyline points="683.9,517.1 697.6,517.1 736.5,517.1 794.8,517.1 863.5,517.1 932.2,517.1 990.5,517.1 1029.4,517.1 1043.1,517.1" fill="none"/><polyline points="766.3,572.2 773.7,572.2 794.8,572.2 826.3,572.2 863.5,572.2 900.7,572.2 932.2,572.2 953.3,572.2 960.7,572.2" fill="none"/><polyline points="863.5,83.5 766.3,102.8 683.9,157.9 628.8,240.3 609.5,337.5 628.8,434.7 683.9,517.1 766.3,572.2 863.5,591.5" fill="none"/><polyline points="863.5,83.5 773.7,102.8 697.6,157.9 646.7,240.3 628.8,337.5 646.7,434.7 697.6,517.1 773.7,572.2 863.5,591.5" fill="none"/><polyline points="863.5,83.5 794.8,102.8 736.5,157.9 697.6,240.3 683.9,337.5 697.6,434.7 736.5,517.1 794.8,572.2 863.5,591.5" fill="none"/><polyline points="863.5,83.5 826.3,102.8 794.8,157.9 773.7,240.3 766.3,337.5 773.7,434.7 794.8,517.1 826.3,572.2 863.5,591.5" fill="none"/><polyline points="863.5,83.5 863.5,102.8 863.5,157.9 863.5,240.3 863.5,337.5 863.5,434.7 863.5,517.1 863.5,572.2 863.5,591.5" fill="none"/><polyline points="863.5,83.5 900.7,102.8 932.2,157.9 953.3,240.3 960.7,337.5 953.3,434.7 932.2,517.1 900.7,572.2 863.5,591.5" fill="none"/><polyline points="863.5,83.5 932.2,102.8 990.5,157.9 1029.4,240.3 1043.1,337.5 1029.4,434.7 990.5,517.1 932.2,572.2 863.5,591.5" fill="none"/><polyline points="863.5,83.5 953.3,102.8 1029.4,157.9 1080.3,240.3 1098.2,337.5 1080.3,434.7 1029.4,517.1 953.3,572.2 863.5,591.5" fill="none"/><polyline points="863.5,83.5 960.7,102.8 1043.1,157.9 1098.2,240.3 1117.5,337.5 1098.2,434.7 1043.1,517.1 960.7,572.2 863.5,591.5" fill="none"/></g><rect x="461.5" y="122.5" width="688" height="800" fill="none" stroke="#2B1A7A" stroke-width="1.1"/><rect x="464.5" y="345.5" width="438" height="600" fill="none" stroke="#2B1A7A" stroke-width="1.1"/></svg><div style="position:absolute;left:263px;top:879px;width:1144px;height:118px;border:1px solid #A0A0A0;border-radius:3px 3px 0 0;box-sizing:border-box;background:#EEEEEE;"></div>
<div style="position:absolute;left:264px;top:880px;width:1142px;height:24px;background:#EEEEEE;"></div>
<div style="position:absolute;left:264px;top:880px;width:71px;height:24px;background:linear-gradient(#E6EEF8 0%,#B4C8E0 45%,#99B2D1 60%,#99B2D1 100%);border-right:1px solid #A8B8CC;border-radius:3px 0 0 0;"></div>
<svg style="position:absolute;left:268px;top:884px;" width="16" height="16" viewBox="0 0 16 16"><rect x="1.5" y="1.5" width="12" height="10" rx="1" fill="#DDE9F7" stroke="#3D6FB3" stroke-width="1.4"/><path d="M4 5 h5 M4 7.5 h7" stroke="#3D6FB3" stroke-width="1"/><path d="M4 14 h7" stroke="#3D6FB3" stroke-width="1.5"/></svg>
<div style="position:absolute;left:287px;top:884px;font-size:13px;line-height:15px;color:#000;white-space:nowrap;">Console</div>
<div style="position:absolute;left:335px;top:880px;width:82px;height:22px;border-right:1px solid #C4C4C4;box-sizing:border-box;"></div>
<svg style="position:absolute;left:341px;top:884px;" width="16" height="16" viewBox="0 0 16 16"><rect x="1.5" y="2.5" width="11" height="11" fill="#F0F8FF" stroke="#4A6FA5"/><rect x="2" y="3" width="10" height="2" fill="#3D78C8"/></svg>
<div style="position:absolute;left:417px;top:880px;width:82px;height:22px;border-right:1px solid #C4C4C4;box-sizing:border-box;"></div>
<svg style="position:absolute;left:423px;top:884px;" width="16" height="16" viewBox="0 0 16 16"><path d="M5.5 4.5 h8 v10 h-8z" fill="#FFF7E0" stroke="#C79A3A"/><circle cx="6" cy="6" r="4.5" fill="#E3343B" stroke="#B01A1A" stroke-width="0.6"/><path d="M4.3 4.3 l3.4 3.4 M7.7 4.3 l-3.4 3.4" stroke="#fff" stroke-width="1.3"/></svg>
<div style="position:absolute;left:499px;top:880px;width:100px;height:22px;border-right:1px solid #C4C4C4;box-sizing:border-box;"></div>
<svg style="position:absolute;left:505px;top:884px;" width="16" height="16" viewBox="0 0 16 16"><rect x="1.5" y="1.5" width="13" height="13" fill="#fff" stroke="#4A6A99" stroke-width="1"/><path d="M3 5 q2.5-2 5 0 t5 0" stroke="#3A7EC8" stroke-width="1.2" fill="none"/><path d="M3 8.5 q2.5-2 5 0 t5 0" stroke="#D98A1F" stroke-width="1.2" fill="none"/><path d="M3 12 q2.5-2 5 0 t5 0" stroke="#3D9A3D" stroke-width="1.2" fill="none"/></svg>
<div style="position:absolute;left:360px;top:884px;font-size:13px;line-height:15px;color:#000;white-space:nowrap;">Problems</div>
<div style="position:absolute;left:442px;top:884px;font-size:13px;line-height:15px;color:#000;white-space:nowrap;">Error Log</div>
<div style="position:absolute;left:524px;top:884px;font-size:13px;line-height:15px;color:#000;white-space:nowrap;">Curve Editor</div>
<div style="position:absolute;left:264px;top:902px;width:1142px;height:94px;background:#F0F0F0;border:2px solid #99B4D1;border-top-width:3px;box-sizing:border-box;"></div>
<div style="position:absolute;left:266px;top:905px;font-size:13px;line-height:15px;color:#000;white-space:nowrap;">console</div>
<div style="position:absolute;left:266px;top:921px;width:1138px;height:1px;background:#A0A0A0;"></div>
<div style="position:absolute;left:266px;top:922px;width:1121px;height:55px;background:#fff;"></div>
<div style="position:absolute;left:1387px;top:922px;width:17px;height:55px;background:#F0F0F0;"></div>
<div style="position:absolute;left:1388px;top:940px;width:15px;height:17px;background:#CDCDCD;"></div>
<svg style="position:absolute;left:1390px;top:928px;" width="12" height="8" viewBox="0 0 12 8"><path d="M1 6 l5-4 l5 4" fill="none" stroke="#505050" stroke-width="1.6"/></svg>
<svg style="position:absolute;left:1390px;top:963px;" width="12" height="8" viewBox="0 0 12 8"><path d="M1 2 l5 4 l5-4" fill="none" stroke="#505050" stroke-width="1.6"/></svg>
<svg style="position:absolute;left:270px;top:979px;" width="8" height="10" viewBox="0 0 8 10"><path d="M6 1 l-4 4 l4 4" fill="none" stroke="#B0B0B0" stroke-width="1.6"/></svg>
<svg style="position:absolute;left:1376px;top:979px;" width="8" height="10" viewBox="0 0 8 10"><path d="M2 1 l4 4 l-4 4" fill="none" stroke="#B0B0B0" stroke-width="1.6"/></svg>
<svg style="position:absolute;left:1217px;top:883px;" width="16" height="16" viewBox="0 0 16 16"><path d="M1.5 0.5 h7 l3 3 v11 h-10z" fill="#fff" stroke="#B8B8B8"/><path d="M3 5 h6 M3 7 h6 M3 9 h6" stroke="#CCC"/><rect x="8" y="9" width="7" height="6" fill="#AAA"/></svg>
<svg style="position:absolute;left:1240px;top:883px;" width="16" height="16" viewBox="0 0 16 16"><rect x="1.5" y="0.5" width="14" height="14" fill="#DDE8F4" stroke="#7A94B8"/><rect x="9" y="1" width="3" height="13" fill="#BFD0E6"/><path d="M2 9 q0-4 3-4 q3 0 3 4" fill="none" stroke="#D4A020" stroke-width="1.5"/><rect x="1" y="9" width="8" height="6" fill="#F2C94C" stroke="#C08A10"/></svg>
<div style="position:absolute;left:1262px;top:882px;width:1px;height:18px;background:#8A8A8A;"></div>
<svg style="position:absolute;left:1272px;top:884px;" width="16" height="16" viewBox="0 0 16 16"><rect x="0.5" y="5.5" width="11" height="9" fill="#EAF3FC" stroke="#4A78B8"/><rect x="1" y="6" width="10" height="2" fill="#3D78C8"/><path d="M6 10 l6-6" stroke="#333" stroke-width="1"/><circle cx="12" cy="4" r="2.5" fill="#3BA03B"/></svg>
<svg style="position:absolute;left:1297px;top:884px;" width="14" height="14" viewBox="0 0 14 14"><rect x="0.5" y="0.5" width="12" height="10" fill="#E0E0E0" stroke="#8A8A8A" stroke-width="1.2"/><path d="M3 4 h6 M3 6.5 h7" stroke="#8A8A8A"/><path d="M3 13 h7" stroke="#8A8A8A" stroke-width="1.5"/></svg>
<svg style="position:absolute;left:1316px;top:888px;" width="9" height="6" viewBox="0 0 9 6"><path d="M0 0 h9 l-4.5 5z" fill="#707070"/></svg>
<svg style="position:absolute;left:1334px;top:883px;" width="16" height="16" viewBox="0 0 16 16"><rect x="0.5" y="3.5" width="13" height="11" fill="#FFFDF0" stroke="#9C8A5A"/><rect x="1" y="4" width="6" height="2" fill="#3D78C8"/><path d="M11 1 v6 M8 4 h6" stroke="#C9A030" stroke-width="1.2"/></svg>
<svg style="position:absolute;left:1355px;top:888px;" width="9" height="6" viewBox="0 0 9 6"><path d="M0 0 h9 l-4.5 5z" fill="#222"/></svg>
<div style="position:absolute;left:1372px;top:884px;width:10px;height:4px;border:1px solid #6A6A6A;box-sizing:border-box;background:#fff;"></div>
<svg style="position:absolute;left:1390px;top:884px;" width="11" height="11" viewBox="0 0 11 11"><rect x="0.5" y="0.5" width="10" height="10" fill="#fff" stroke="#6A6A6A"/><path d="M1 2.5 h9" stroke="#6A6A6A"/></svg>
<div style="position:absolute;left:1410px;top:51px;width:265px;height:472px;border:1px solid #A0A0A0;border-radius:3px 3px 0 0;box-sizing:border-box;background:#EEEEEE;"></div>
<div style="position:absolute;left:1411px;top:52px;width:67px;height:23px;background:linear-gradient(#FBFBFB,#F2F2F2);border-right:1px solid #B8B8B8;border-radius:3px 0 0 0;"></div>
<div style="position:absolute;left:1411px;top:74px;width:263px;height:1px;background:#A0A0A0;"></div>
<div style="position:absolute;left:1411px;top:52px;width:67px;height:23px;background:linear-gradient(#FBFBFB,#F2F2F2);border-right:1px solid #B8B8B8;border-radius:3px 0 0 0;"></div>
<svg style="position:absolute;left:1415px;top:56px;" width="16" height="16" viewBox="0 0 16 16"><rect x="1.5" y="1.5" width="5" height="5" fill="#E6F0FA" stroke="#3A78C8"/><rect x="1.5" y="9.5" width="5" height="5" fill="#E6F0FA" stroke="#3A78C8"/><path d="M8 3 h6 M8 12 h6" stroke="#3A78C8"/><rect x="8.5" y="6.5" width="2" height="2" fill="none" stroke="#3A78C8" stroke-width="0.7"/><path d="M12 8 h2" stroke="#3A78C8"/></svg>
<div style="position:absolute;left:1434px;top:56px;font-size:13px;line-height:15px;color:#000;white-space:nowrap;">Outline</div>
<div style="position:absolute;left:1640px;top:56px;width:10px;height:4px;border:1px solid #6A6A6A;box-sizing:border-box;background:#fff;"></div>
<svg style="position:absolute;left:1658px;top:56px;" width="11" height="11" viewBox="0 0 11 11"><rect x="0.5" y="0.5" width="10" height="10" fill="#fff" stroke="#6A6A6A"/><path d="M1 2.5 h9" stroke="#6A6A6A"/></svg>
<div style="position:absolute;left:1411px;top:75px;width:263px;height:447px;background:#fff;"></div>
<div style="position:absolute;left:1433px;top:77px;width:102px;height:17px;background:#F7F7F7;border:1px solid #DADADA;box-sizing:border-box;"></div>
<svg style="position:absolute;left:1424px;top:82px;" width="7" height="8" viewBox="0 0 7 8"><path d="M6 1 v6 h-6z" fill="#404040"/></svg>
<svg style="position:absolute;left:1435px;top:77px;" width="16" height="16" viewBox="0 0 16 16"><path d="M1.5 5 l6.5-3 l6.5 3 v6.5 l-6.5 3.5 l-6.5-3.5z" fill="#8EC3EF" stroke="#5A9BD6" stroke-width="1"/><path d="M1.5 5 l6.5 3 l6.5-3 M8 8 v7" stroke="#CFE6FA" stroke-width="1" fill="none"/><path d="M8 8 l6.5-3 v6.5 l-6.5 3.5z" fill="#6FAEE6"/></svg>
<div style="position:absolute;left:1456px;top:78px;font-size:13px;line-height:15px;color:#000;white-space:nowrap;">Game Object</div>
<svg style="position:absolute;left:1443px;top:98px;" width="7" height="10" viewBox="0 0 7 10"><path d="M1.5 1.5 l4 3.5 l-4 3.5z" fill="none" stroke="#8A8A8A" stroke-width="1"/></svg>
<svg style="position:absolute;left:1455px;top:95px;" width="16" height="16" viewBox="0 0 16 16"><rect x="3" y="1" width="6" height="3" fill="#ddd" stroke="#888" stroke-width="0.8"/><rect x="2" y="4" width="9" height="11" rx="1" fill="#D8D8D8" stroke="#8A8A8A" stroke-width="1"/><text x="5" y="13" font-size="6" fill="#333" font-family="Liberation Sans">1</text></svg>
<div style="position:absolute;left:1475px;top:96px;font-size:13px;line-height:15px;color:#000;white-space:nowrap;">collisionobject</div>
<svg style="position:absolute;left:1454px;top:113px;" width="16" height="16" viewBox="0 0 16 16"><polygon points="14.83,6.47 14.83,9.53 12.93,8.86 12.09,10.88 13.91,11.75 11.75,13.91 10.88,12.09 8.86,12.93 9.53,14.83 6.47,14.83 7.14,12.93 5.12,12.09 4.25,13.91 2.09,11.75 3.91,10.88 3.07,8.86 1.17,9.53 1.17,6.47 3.07,7.14 3.91,5.12 2.09,4.25 4.25,2.09 5.12,3.91 7.14,3.07 6.47,1.17 9.53,1.17 8.86,3.07 10.88,3.91 11.75,2.09 13.91,4.25 12.09,5.12 12.93,7.14" fill="#C8C8C8" stroke="#9A9A9A" stroke-width="1"/><circle cx="8" cy="8" r="2.2" fill="#fff" stroke="#9A9A9A" stroke-width="1"/></svg>
<div style="position:absolute;left:1475px;top:112px;width:198px;height:18px;overflow:hidden;"><div style="position:absolute;left:0px;top:2px;font-size:13px;line-height:15px;color:#000;white-space:nowrap;">script (/main/Level/hero/hero.script)</div>
</div>
<svg style="position:absolute;left:1443px;top:134px;" width="7" height="10" viewBox="0 0 7 10"><path d="M1.5 1.5 l4 3.5 l-4 3.5z" fill="none" stroke="#8A8A8A" stroke-width="1"/></svg>
<svg style="position:absolute;left:1454px;top:131px;" width="16" height="16" viewBox="0 0 16 16"><path d="M1 10 C3 -2 6 0 8 8 S12 18 15 5" fill="none" stroke="#2D78B8" stroke-width="1.4"/></svg>
<div style="position:absolute;left:1475px;top:132px;font-size:13px;line-height:15px;color:#000;white-space:nowrap;">spinemodel</div>
<div style="position:absolute;left:1411px;top:503px;width:263px;height:18px;background:#F0F0F0;"></div>
<div style="position:absolute;left:1430px;top:503px;width:207px;height:15px;background:#CDCDCD;"></div>
<svg style="position:absolute;left:1417px;top:505px;" width="8" height="10" viewBox="0 0 8 10"><path d="M6 1 l-4 4 l4 4" fill="none" stroke="#606060" stroke-width="1.6"/></svg>
<svg style="position:absolute;left:1661px;top:505px;" width="8" height="10" viewBox="0 0 8 10"><path d="M2 1 l4 4 l-4 4" fill="none" stroke="#606060" stroke-width="1.6"/></svg>
<div style="position:absolute;left:1410px;top:525px;width:265px;height:472px;border:1px solid #A0A0A0;border-radius:3px 3px 0 0;box-sizing:border-box;background:#EEEEEE;"></div>
<div style="position:absolute;left:1411px;top:526px;width:86px;height:23px;background:linear-gradient(#FBFBFB,#F2F2F2);border-right:1px solid #B8B8B8;border-radius:3px 0 0 0;"></div>
<div style="position:absolute;left:1411px;top:548px;width:263px;height:1px;background:#A0A0A0;"></div>
<div style="position:absolute;left:1411px;top:526px;width:86px;height:23px;background:linear-gradient(#FBFBFB,#F2F2F2);border-right:1px solid #B8B8B8;border-radius:3px 0 0 0;"></div>
<svg style="position:absolute;left:1415px;top:531px;" width="16" height="16" viewBox="0 0 16 16"><rect x="1.5" y="2.5" width="13" height="11" fill="#EEF4FB" stroke="#4A6FA5"/><path d="M1.5 5.5 h13 M1.5 8.5 h13 M1.5 11 h13 M5.5 5 v8.5" stroke="#6B8DBF" stroke-width="0.8"/><rect x="2" y="3" width="12" height="2" fill="#7EA6DA"/></svg>
<div style="position:absolute;left:1434px;top:530px;font-size:13px;line-height:15px;color:#000;white-space:nowrap;">Properties</div>
<div style="position:absolute;left:1525px;top:526px;width:23px;height:23px;background:#CCE4F7;border:1px solid #5A9FE0;box-sizing:border-box;"></div>
<svg style="position:absolute;left:1530px;top:530px;" width="14" height="14" viewBox="0 0 14 14"><path d="M2.5 1 v11 M2.5 4.5 h5 M2.5 11.5 h5" stroke="#5A7FB0" stroke-width="1" fill="none"/><rect x="1" y="0.5" width="3" height="2.5" fill="#fff" stroke="#5A7FB0" stroke-width="0.8"/><rect x="8" y="3" width="3" height="3" fill="#fff" stroke="#5A7FB0" stroke-width="0.8"/><rect x="8" y="10" width="3" height="3" fill="#fff" stroke="#5A7FB0" stroke-width="0.8"/></svg>
<svg style="position:absolute;left:1551px;top:530px;" width="16" height="16" viewBox="0 0 16 16"><path d="M1 3 h5 M1 12 h5 M6 1 v4 M6 10 v4" stroke="#333" stroke-width="1"/><path d="M6 6.5 h5 v-2.5 l4 3.5 l-4 3.5 v-2.5 h-5z" fill="#F7D98A" stroke="#C98A1E"/></svg>
<svg style="position:absolute;left:1575px;top:530px;" width="16" height="16" viewBox="0 0 16 16"><rect x="0.5" y="1.5" width="12" height="11" fill="#F4F4F4" stroke="#BBB"/><path d="M1 5 h11 M1 8 h11 M5 2 v10" stroke="#CCC"/><path d="M9 14 q0-4 5-4" stroke="#BBB" stroke-width="2" fill="none"/></svg>
<svg style="position:absolute;left:1598px;top:529px;" width="16" height="16" viewBox="0 0 16 16"><rect x="0.5" y="5.5" width="11" height="9" fill="#EAF3FC" stroke="#4A78B8"/><rect x="1" y="6" width="10" height="2" fill="#3D78C8"/><path d="M6 10 l6-6" stroke="#333" stroke-width="1"/><circle cx="12" cy="4" r="2.5" fill="#3BA03B"/></svg>
<svg style="position:absolute;left:1620px;top:530px;" width="11" height="7" viewBox="0 0 11 7"><path d="M0.5 0.5 h10 l-5 6z" fill="#fff" stroke="#6A6A6A" stroke-width="1"/></svg>
<div style="position:absolute;left:1640px;top:530px;width:10px;height:4px;border:1px solid #6A6A6A;box-sizing:border-box;background:#fff;"></div>
<svg style="position:absolute;left:1658px;top:530px;" width="11" height="11" viewBox="0 0 11 11"><rect x="0.5" y="0.5" width="10" height="10" fill="#fff" stroke="#6A6A6A"/><path d="M1 2.5 h9" stroke="#6A6A6A"/></svg>
<div style="position:absolute;left:1411px;top:549px;width:263px;height:447px;background:#fff;"></div>
<div style="position:absolute;left:1412px;top:551px;width:261px;height:24px;background:#FAFBFC;border-bottom:1px solid #E2EAF4;box-sizing:border-box;"></div>
<div style="position:absolute;left:1515px;top:551px;width:1px;height:445px;background:#E0E0E0;"></div>
<div style="position:absolute;left:1667px;top:551px;width:1px;height:445px;background:#E0E0E0;"></div>
<div style="position:absolute;left:1419px;top:555px;font-size:13px;line-height:15px;color:#000;white-space:nowrap;">Property</div>
<div style="position:absolute;left:1522px;top:555px;font-size:13px;line-height:15px;color:#000;white-space:nowrap;">Value</div>
<div style="position:absolute;left:1412px;top:592px;width:261px;height:1px;background:#E2E2E2;"></div>
<div style="position:absolute;left:1412px;top:610px;width:261px;height:1px;background:#E2E2E2;"></div>
<div style="position:absolute;left:1412px;top:628px;width:261px;height:1px;background:#E2E2E2;"></div>
<div style="position:absolute;left:1412px;top:646px;width:261px;height:1px;background:#E2E2E2;"></div>
<div style="position:absolute;left:1412px;top:664px;width:261px;height:1px;background:#E2E2E2;"></div>
<div style="position:absolute;left:1412px;top:682px;width:261px;height:1px;background:#E2E2E2;"></div>
<div style="position:absolute;left:1412px;top:700px;width:261px;height:1px;background:#E2E2E2;"></div>
<div style="position:absolute;left:1412px;top:718px;width:261px;height:1px;background:#E2E2E2;"></div>
<div style="position:absolute;left:1412px;top:736px;width:261px;height:1px;background:#E2E2E2;"></div>
<div style="position:absolute;left:1412px;top:754px;width:261px;height:1px;background:#E2E2E2;"></div>
<div style="position:absolute;left:1412px;top:772px;width:261px;height:1px;background:#E2E2E2;"></div>
<div style="position:absolute;left:1412px;top:790px;width:261px;height:1px;background:#E2E2E2;"></div>
<div style="position:absolute;left:1412px;top:808px;width:261px;height:1px;background:#E2E2E2;"></div>
<div style="position:absolute;left:1412px;top:826px;width:261px;height:1px;background:#E2E2E2;"></div>
<div style="position:absolute;left:1412px;top:844px;width:261px;height:1px;background:#E2E2E2;"></div>
<div style="position:absolute;left:1412px;top:862px;width:261px;height:1px;background:#E2E2E2;"></div>
<div style="position:absolute;left:1412px;top:880px;width:261px;height:1px;background:#E2E2E2;"></div>
<div style="position:absolute;left:1412px;top:898px;width:261px;height:1px;background:#E2E2E2;"></div>
<div style="position:absolute;left:1412px;top:916px;width:261px;height:1px;background:#E2E2E2;"></div>
<div style="position:absolute;left:1412px;top:934px;width:261px;height:1px;background:#E2E2E2;"></div>
<div style="position:absolute;left:1412px;top:952px;width:261px;height:1px;background:#E2E2E2;"></div>
<div style="position:absolute;left:1412px;top:970px;width:261px;height:1px;background:#E2E2E2;"></div>
<div style="position:absolute;left:1412px;top:988px;width:261px;height:1px;background:#E2E2E2;"></div>
<div style="position:absolute;left:1412px;top:574px;width:261px;height:1px;background:#E2EAF4;"></div>

<div style="position:absolute;left:8px;top:997px;width:1667px;height:32px;background:#F0F0F0;"></div>
</body></html>
